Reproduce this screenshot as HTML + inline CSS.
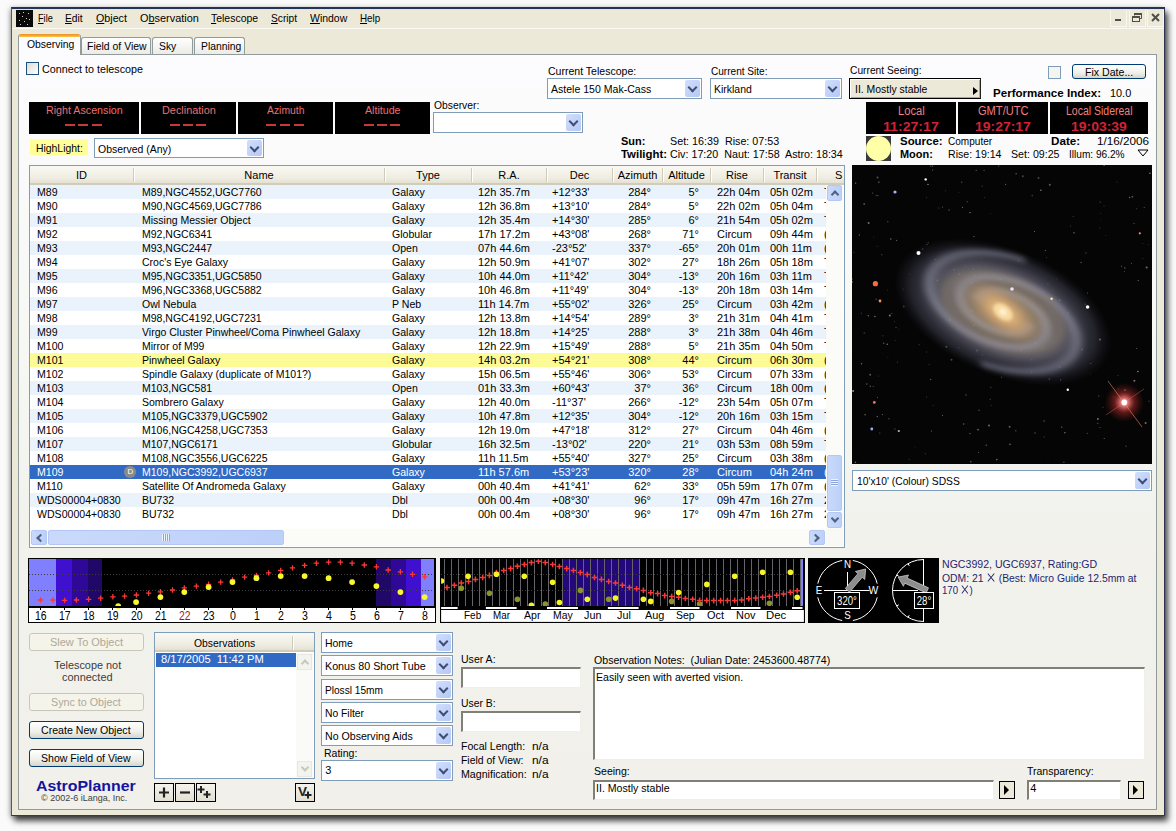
<!DOCTYPE html>
<html><head><meta charset="utf-8">
<style>
*{box-sizing:border-box;margin:0;padding:0}
html,body{width:1176px;height:831px;overflow:hidden;background:#FAFAFA}
body{position:relative;font-family:"Liberation Sans",sans-serif;font-size:11px;color:#000}
.a{position:absolute}
.t{position:absolute;white-space:nowrap;line-height:13px}
.win{position:absolute;left:11px;top:7px;width:1154px;height:809px;background:#ECE9D8;border:1px solid #2c3550;border-top:2px solid #243458;border-left-color:#55585c;border-bottom-color:#3a3a3a;box-shadow:3px 5px 6px rgba(0,0,0,.7),-1px 1px 5px rgba(0,0,0,.3)}
.menu u{text-decoration:underline}
.panel{position:absolute;left:18px;top:54px;width:1139px;height:756px;border:1px solid #919B9C;background:linear-gradient(#FCFCFE 0%,#F7F7F4 38%,#F2F2ED 62%,#F1F0EA 100%)}
.tab{position:absolute;border:1px solid #919B9C;border-bottom:none;border-radius:3px 3px 0 0;background:linear-gradient(#fff,#ECEBE5);text-align:center;line-height:15px}
.dd{position:absolute;background:#fff;border:1px solid #7F9DB9}
.dd .v{position:absolute;right:1px;top:1px;bottom:1px;width:15px;background:linear-gradient(135deg,#D2DEFC,#B4C8F6);border-radius:2px}
.dd .v:after{content:"";position:absolute;left:4px;top:4px;width:5px;height:5px;border-right:2.5px solid #3E4E72;border-bottom:2.5px solid #3E4E72;transform:rotate(45deg)}
.dd .s{position:absolute;left:4px;top:3px;white-space:nowrap;line-height:13px}
.led{position:absolute;background:#000;color:#E8605A;text-align:center}
.btn{position:absolute;border:1px solid #003C74;border-radius:3px;background:linear-gradient(#FFFFFF,#F0F0EA 60%,#D8D4C8);text-align:center;line-height:15px}
.btn.dis{border-color:#C9C7BA;color:#ACA899;background:#F5F4EA}
.chk{position:absolute;width:13px;height:13px;border:1px solid #1C5180;background:linear-gradient(135deg,#DCDCD7,#FFFFFF)}
.b{font-weight:bold}
.sbb{background:linear-gradient(90deg,#CAD9FB,#BCD0F8);border:1px solid #B4C8F6;border-radius:2px}
.chev{position:absolute;left:50%;top:50%;width:6px;height:6px;border-left:2px solid #4D6185;border-top:2px solid #4D6185}
.chev.up{transform:translate(-50%,-25%) rotate(45deg)}
.chev.dn{transform:translate(-50%,-75%) rotate(225deg)}
.chev.lf{transform:translate(-25%,-50%) rotate(-45deg)}
.chev.rt{transform:translate(-75%,-50%) rotate(135deg)}
.grip{position:absolute;left:3px;right:3px;top:50%;height:7px;margin-top:-4px;background:repeating-linear-gradient(#EEF4FE 0 1px,#8CA6D8 1px 2px)}
.grip.h{left:50%;width:8px;right:auto;top:3px;bottom:3px;height:auto;margin:0 0 0 -4px;background:repeating-linear-gradient(90deg,#EEF4FE 0 1px,#8CA6D8 1px 2px)}
</style></head><body>
<div class="win"></div>
<div class="a" style="left:16px;top:10px;width:17px;height:17px;background:#0a0a0a"></div>
<div class="a" style="left:19px;top:13px;width:1px;height:1px;background:#d0d0c0"></div>
<div class="a" style="left:23px;top:12px;width:1px;height:1px;background:#d0d0c0"></div>
<div class="a" style="left:28px;top:13px;width:1px;height:1px;background:#d0d0c0"></div>
<div class="a" style="left:22px;top:16px;width:1px;height:1px;background:#d0d0c0"></div>
<div class="a" style="left:26px;top:18px;width:1px;height:1px;background:#d0d0c0"></div>
<div class="a" style="left:19px;top:20px;width:1px;height:1px;background:#d0d0c0"></div>
<div class="a" style="left:24px;top:21px;width:1px;height:1px;background:#d0d0c0"></div>
<div class="a" style="left:29px;top:19px;width:1px;height:1px;background:#d0d0c0"></div>
<div class="a" style="left:20px;top:24px;width:1px;height:1px;background:#d0d0c0"></div>
<div class="a" style="left:27px;top:24px;width:1px;height:1px;background:#d0d0c0"></div>
<div class="a" style="transform:scaleX(0.8338);transform-origin:0 0;left:38px;top:12.79px;font-size:11px;line-height:11px;white-space:nowrap"><u>F</u>ile</div>
<div class="a" style="transform:scaleX(0.9331);transform-origin:0 0;left:65.2px;top:12.79px;font-size:11px;line-height:11px;white-space:nowrap"><u>E</u>dit</div>
<div class="a" style="transform:scaleX(0.9713);transform-origin:0 0;left:96px;top:12.79px;font-size:11px;line-height:11px;white-space:nowrap"><u>O</u>bject</div>
<div class="a" style="transform:scaleX(0.9911);transform-origin:0 0;left:139.5px;top:12.79px;font-size:11px;line-height:11px;white-space:nowrap">O<u>b</u>servation</div>
<div class="a" style="transform:scaleX(0.9506);transform-origin:0 0;left:211px;top:12.79px;font-size:11px;line-height:11px;white-space:nowrap"><u>T</u>elescope</div>
<div class="a" style="transform:scaleX(0.9280);transform-origin:0 0;left:270.7px;top:12.79px;font-size:11px;line-height:11px;white-space:nowrap"><u>S</u>cript</div>
<div class="a" style="transform:scaleX(0.9504);transform-origin:0 0;left:310px;top:12.79px;font-size:11px;line-height:11px;white-space:nowrap"><u>W</u>indow</div>
<div class="a" style="transform:scaleX(0.8922);transform-origin:0 0;left:359.8px;top:12.79px;font-size:11px;line-height:11px;white-space:nowrap"><u>H</u>elp</div>
<div class="a" style="left:12px;top:28px;width:1152px;height:1px;background:#FAF9F3"></div>
<svg class="a" style="left:1108px;top:9px" width="56" height="19" viewBox="0 0 56 19"><rect x="2.5" y="0.5" width="16" height="17" fill="none" stroke="#F8F7F0" stroke-width="1"/><rect x="21.5" y="0.5" width="16" height="17" fill="none" stroke="#F8F7F0" stroke-width="1"/><rect x="39.5" y="0.5" width="16" height="17" fill="none" stroke="#F8F7F0" stroke-width="1"/><rect x="7" y="10" width="6" height="2" fill="#4E4E48"/><rect x="24.5" y="7.5" width="7" height="5" fill="none" stroke="#4E4E48" stroke-width="1"/><rect x="24" y="7" width="8" height="2" fill="#4E4E48"/><path d="M26.5 6.5V4.5H33.5V9.5H32" fill="none" stroke="#4E4E48" stroke-width="1"/><rect x="26" y="4" width="8" height="2" fill="#4E4E48"/><path d="M44 5L51 12M51 5L44 12" stroke="#4E4E48" stroke-width="2"/></svg>
<div class="a" style="left:12px;top:9px;width:1152px;height:1px;background:#D8E4F8"></div>
<div class="panel"></div>
<div class="tab" style="left:81px;top:37px;width:70px;height:17px"></div>
<div class="tab" style="left:152px;top:37px;width:41px;height:17px"></div>
<div class="tab" style="left:194px;top:37px;width:51px;height:17px"></div>
<div class="a" style="left:18px;top:34px;width:63px;height:21px;background:#FCFCFE;border:1px solid #919B9C;border-top:none;border-bottom:none;border-radius:3px 3px 0 0;overflow:hidden"><div class="a" style="left:-1px;top:0;right:-1px;height:3px;background:linear-gradient(#E68B2C,#FFC73C)"></div></div>
<div class="a" style="transform:scaleX(0.9453);transform-origin:0 0;left:26.8px;top:38.59px;font-size:11px;line-height:11px;white-space:nowrap">Observing</div>
<div class="a" style="transform:scaleX(0.9493);transform-origin:0 0;left:86.7px;top:40.69px;font-size:11px;line-height:11px;white-space:nowrap">Field of View</div>
<div class="a" style="transform:scaleX(0.9431);transform-origin:0 0;left:158.6px;top:40.69px;font-size:11px;line-height:11px;white-space:nowrap">Sky</div>
<div class="a" style="transform:scaleX(0.9410);transform-origin:0 0;left:200.9px;top:40.69px;font-size:11px;line-height:11px;white-space:nowrap">Planning</div>
<div class="chk" style="left:26px;top:62px"></div>
<div class="a" style="transform:scaleX(0.9772);transform-origin:0 0;left:42px;top:64.19px;font-size:11px;line-height:11px;white-space:nowrap">Connect to telescope</div>
<div class="a" style="left:29px;top:102px;width:110px;height:32px;background:#000"></div>
<div class="a" style="transform:scaleX(0.9722);transform-origin:0 0;left:45.65px;top:105.09px;font-size:11px;line-height:11px;color:#E87070;white-space:nowrap">Right Ascension</div>
<div class="a" style="left:65px;top:124px;width:10px;height:2px;background:#C83838"></div>
<div class="a" style="left:78px;top:124px;width:10px;height:2px;background:#C83838"></div>
<div class="a" style="left:92px;top:124px;width:10px;height:2px;background:#C83838"></div>
<div class="a" style="left:141px;top:102px;width:95px;height:32px;background:#000"></div>
<div class="a" style="transform:scaleX(0.9904);transform-origin:0 0;left:161.55px;top:105.09px;font-size:11px;line-height:11px;color:#E87070;white-space:nowrap">Declination</div>
<div class="a" style="left:170px;top:124px;width:10px;height:2px;background:#C83838"></div>
<div class="a" style="left:183px;top:124px;width:10px;height:2px;background:#C83838"></div>
<div class="a" style="left:196px;top:124px;width:10px;height:2px;background:#C83838"></div>
<div class="a" style="left:238px;top:102px;width:95px;height:32px;background:#000"></div>
<div class="a" style="transform:scaleX(0.9434);transform-origin:0 0;left:266.75px;top:105.09px;font-size:11px;line-height:11px;color:#E87070;white-space:nowrap">Azimuth</div>
<div class="a" style="left:266px;top:124px;width:10px;height:2px;background:#C83838"></div>
<div class="a" style="left:280px;top:124px;width:10px;height:2px;background:#C83838"></div>
<div class="a" style="left:294px;top:124px;width:10px;height:2px;background:#C83838"></div>
<div class="a" style="left:335px;top:102px;width:95px;height:32px;background:#000"></div>
<div class="a" style="transform:scaleX(0.9672);transform-origin:0 0;left:364.75px;top:105.09px;font-size:11px;line-height:11px;color:#E87070;white-space:nowrap">Altitude</div>
<div class="a" style="left:364px;top:124px;width:10px;height:2px;background:#C83838"></div>
<div class="a" style="left:377px;top:124px;width:10px;height:2px;background:#C83838"></div>
<div class="a" style="left:390px;top:124px;width:10px;height:2px;background:#C83838"></div>
<div class="a" style="left:30px;top:139px;width:58px;height:16px;background:#FFFF99"></div>
<div class="a" style="transform:scaleX(0.9446);transform-origin:0 0;left:35.5px;top:142.69px;font-size:11px;line-height:11px;white-space:nowrap">HighLight:</div>
<div class="dd" style="left:94px;top:138px;width:170px;height:20px"><div class="v"></div></div>
<div class="a" style="transform:scaleX(0.9516);transform-origin:0 0;left:98px;top:144.19px;font-size:11px;line-height:11px;white-space:nowrap">Observed (Any)</div>
<div class="a" style="transform:scaleX(0.9379);transform-origin:0 0;left:433.8px;top:100.39px;font-size:11px;line-height:11px;white-space:nowrap">Observer:</div>
<div class="dd" style="left:433px;top:112px;width:150px;height:21px"><div class="v"></div></div>
<div class="a" style="transform:scaleX(0.9574);transform-origin:0 0;left:548px;top:65.69px;font-size:11px;line-height:11px;white-space:nowrap">Current Telescope:</div>
<div class="dd" style="left:547px;top:78px;width:155px;height:21px"><div class="v"></div></div>
<div class="a" style="transform:scaleX(0.9584);transform-origin:0 0;left:551px;top:84.39px;font-size:11px;line-height:11px;white-space:nowrap">Astele 150 Mak-Cass</div>
<div class="a" style="transform:scaleX(0.9150);transform-origin:0 0;left:710.7px;top:65.69px;font-size:11px;line-height:11px;white-space:nowrap">Current Site:</div>
<div class="dd" style="left:710px;top:78px;width:132px;height:21px"><div class="v"></div></div>
<div class="a" style="transform:scaleX(0.9509);transform-origin:0 0;left:714.4px;top:84.39px;font-size:11px;line-height:11px;white-space:nowrap">Kirkland</div>
<div class="a" style="transform:scaleX(0.9937);transform-origin:0 0;left:620.9px;top:136.39px;font-size:11px;line-height:11px;font-weight:bold;white-space:nowrap">Sun:</div>
<div class="a" style="transform:scaleX(0.9757);transform-origin:0 0;left:669.9px;top:136.39px;font-size:11px;line-height:11px;white-space:nowrap">Set: 16:39&nbsp; Rise: 07:53</div>
<div class="a" style="transform:scaleX(1.0359);transform-origin:0 0;left:620.9px;top:148.99px;font-size:11px;line-height:11px;font-weight:bold;white-space:nowrap">Twilight:</div>
<div class="a" style="transform:scaleX(0.9744);transform-origin:0 0;left:669.9px;top:148.99px;font-size:11px;line-height:11px;white-space:nowrap">Civ: 17:20&nbsp; Naut: 17:58&nbsp; Astro: 18:34</div>
<div class="a" style="transform:scaleX(0.9293);transform-origin:0 0;left:849.8px;top:65.29px;font-size:11px;line-height:11px;white-space:nowrap">Current Seeing:</div>
<div class="a" style="left:849px;top:78px;width:132px;height:21px;border:1px solid #000;border-right-color:#222;background:#ECE9D8;box-shadow:inset 1px 1px 0 #fff,inset -1px -1px 0 #ACA899"></div>
<div class="a" style="transform:scaleX(0.9474);transform-origin:0 0;left:854.6px;top:84.09px;font-size:11px;line-height:11px;white-space:nowrap">II. Mostly stable</div>
<div class="a" style="left:973px;top:87px;width:0;height:0;border-left:5px solid #000;border-top:4.5px solid transparent;border-bottom:4.5px solid transparent"></div>
<div class="chk" style="left:1048px;top:66px;border-color:#7F9DB9;background:#F4F4F0"></div>
<div class="btn" style="left:1072px;top:64px;width:74px;height:15px"></div>
<div class="a" style="transform:scaleX(0.9616);transform-origin:0 0;left:1085px;top:67.19px;font-size:11px;line-height:11px;white-space:nowrap">Fix Date...</div>
<div class="a" style="transform:scaleX(1.0516);transform-origin:0 0;left:993px;top:87.69px;font-size:11px;line-height:11px;font-weight:bold;white-space:nowrap">Performance Index:</div>
<div class="a" style="transform:scaleX(0.9896);transform-origin:0 0;left:1110px;top:87.69px;font-size:11px;line-height:11px;white-space:nowrap">10.0</div>
<div class="a" style="left:866px;top:102px;width:90px;height:32px;background:#000"></div>
<div class="a" style="transform:scaleX(0.9307);transform-origin:0 0;left:897.65px;top:104.64px;font-size:12px;line-height:12px;color:#EE8080;white-space:nowrap">Local</div>
<div class="a" style="transform:scaleX(1.0871);transform-origin:0 0;left:883.1px;top:119.70px;font-size:13px;line-height:13px;font-weight:bold;color:#D42038;white-space:nowrap">11:27:17</div>
<div class="a" style="left:958px;top:102px;width:90px;height:32px;background:#000"></div>
<div class="a" style="transform:scaleX(0.9240);transform-origin:0 0;left:977.75px;top:104.64px;font-size:12px;line-height:12px;color:#EE8080;white-space:nowrap">GMT/UTC</div>
<div class="a" style="transform:scaleX(1.0721);transform-origin:0 0;left:975.1px;top:119.70px;font-size:13px;line-height:13px;font-weight:bold;color:#D42038;white-space:nowrap">19:27:17</div>
<div class="a" style="left:1050px;top:102px;width:98px;height:32px;background:#000"></div>
<div class="a" style="transform:scaleX(0.8743);transform-origin:0 0;left:1065.75px;top:104.64px;font-size:12px;line-height:12px;color:#EE8080;white-space:nowrap">Local Sidereal</div>
<div class="a" style="transform:scaleX(1.0721);transform-origin:0 0;left:1071.1px;top:119.70px;font-size:13px;line-height:13px;font-weight:bold;color:#D42038;white-space:nowrap">19:03:39</div>
<div class="a" style="left:866px;top:136px;width:25px;height:25px;background:#3a3a3a"></div>
<div class="a" style="left:866px;top:136px;width:25px;height:25px;border-radius:50%;background:#FFFFA8"></div>
<div class="a" style="transform:scaleX(1.0398);transform-origin:0 0;left:899.8px;top:135.69px;font-size:11px;line-height:11px;font-weight:bold;white-space:nowrap">Source:</div>
<div class="a" style="transform:scaleX(0.9131);transform-origin:0 0;left:947.9px;top:135.69px;font-size:11px;line-height:11px;white-space:nowrap">Computer</div>
<div class="a" style="transform:scaleX(1.0612);transform-origin:0 0;left:1050.8px;top:135.69px;font-size:11px;line-height:11px;font-weight:bold;white-space:nowrap">Date:</div>
<div class="a" style="transform:scaleX(1.0626);transform-origin:0 0;left:1097.2px;top:135.69px;font-size:11px;line-height:11px;white-space:nowrap">1/16/2006</div>
<div class="a" style="transform:scaleX(0.9944);transform-origin:0 0;left:899.8px;top:148.59px;font-size:11px;line-height:11px;font-weight:bold;white-space:nowrap">Moon:</div>
<div class="a" style="transform:scaleX(0.9613);transform-origin:0 0;left:947.9px;top:148.59px;font-size:11px;line-height:11px;white-space:nowrap">Rise: 19:14</div>
<div class="a" style="transform:scaleX(0.9670);transform-origin:0 0;left:1010.7px;top:148.59px;font-size:11px;line-height:11px;white-space:nowrap">Set: 09:25</div>
<div class="a" style="transform:scaleX(0.9185);transform-origin:0 0;left:1068.7px;top:148.59px;font-size:11px;line-height:11px;white-space:nowrap">Illum: 96.2%</div>
<svg class="a" style="left:1137px;top:149px" width="12" height="8"><path d="M1 1 H11 L6 7 Z" fill="none" stroke="#000" stroke-width="1"/></svg>
<div class="a" style="left:29px;top:165px;width:816px;height:383px;background:#fff;border:1px solid #7F9DB9"></div>
<div class="a" style="left:30px;top:166px;width:814px;height:19px;background:linear-gradient(#F9F8F3,#EFEDE2 70%,#E4E1D2);border-bottom:2px solid #D0CCBC"></div>
<div class="a" style="left:133px;top:168px;width:2px;height:14px;border-left:1px solid #CFCBBB;border-right:1px solid #fff"></div>
<div class="a" style="left:384px;top:168px;width:2px;height:14px;border-left:1px solid #CFCBBB;border-right:1px solid #fff"></div>
<div class="a" style="left:471px;top:168px;width:2px;height:14px;border-left:1px solid #CFCBBB;border-right:1px solid #fff"></div>
<div class="a" style="left:546px;top:168px;width:2px;height:14px;border-left:1px solid #CFCBBB;border-right:1px solid #fff"></div>
<div class="a" style="left:612px;top:168px;width:2px;height:14px;border-left:1px solid #CFCBBB;border-right:1px solid #fff"></div>
<div class="a" style="left:662px;top:168px;width:2px;height:14px;border-left:1px solid #CFCBBB;border-right:1px solid #fff"></div>
<div class="a" style="left:710px;top:168px;width:2px;height:14px;border-left:1px solid #CFCBBB;border-right:1px solid #fff"></div>
<div class="a" style="left:763px;top:168px;width:2px;height:14px;border-left:1px solid #CFCBBB;border-right:1px solid #fff"></div>
<div class="a" style="left:816px;top:168px;width:2px;height:14px;border-left:1px solid #CFCBBB;border-right:1px solid #fff"></div>
<div class="t" style="left:30px;width:103px;text-align:center;top:169px">ID</div>
<div class="t" style="left:134px;width:250px;text-align:center;top:169px">Name</div>
<div class="t" style="left:385px;width:86px;text-align:center;top:169px">Type</div>
<div class="t" style="left:472px;width:74px;text-align:center;top:169px">R.A.</div>
<div class="t" style="left:547px;width:65px;text-align:center;top:169px">Dec</div>
<div class="t" style="left:613px;width:49px;text-align:center;top:169px">Azimuth</div>
<div class="t" style="left:663px;width:47px;text-align:center;top:169px">Altitude</div>
<div class="t" style="left:711px;width:52px;text-align:center;top:169px">Rise</div>
<div class="t" style="left:764px;width:52px;text-align:center;top:169px">Transit</div>
<div class="t" style="left:835px;top:169px">S</div>
<div class="a" style="left:30px;top:185px;width:796px;height:344px;overflow:hidden">
<div class="a" style="left:0;top:0px;width:800px;height:14px;background:#EAF3FB"></div>
<div class="t" style="left:7px;top:1px;color:#000;transform:scaleX(0.96);transform-origin:0 0;">M89</div>
<div class="t" style="left:112px;top:1px;color:#000;transform:scaleX(0.955);transform-origin:0 0;">M89,NGC4552,UGC7760</div>
<div class="t" style="left:362px;top:1px;color:#000;transform:scaleX(0.96);transform-origin:0 0;">Galaxy</div>
<div class="t" style="left:448px;top:1px;color:#000;">12h 35.7m</div>
<div class="t" style="left:522px;top:1px;color:#000;">+12°33'</div>
<div class="t" style="right:175px;top:1px;color:#000">284°</div>
<div class="t" style="right:127px;top:1px;color:#000">5°</div>
<div class="t" style="left:687px;top:1px;color:#000;">22h 04m</div>
<div class="t" style="left:740px;top:1px;color:#000;">05h 02m</div>
<div class="t" style="left:794px;top:1px;color:#000;">T</div>
<div class="t" style="left:7px;top:15px;color:#000;transform:scaleX(0.96);transform-origin:0 0;">M90</div>
<div class="t" style="left:112px;top:15px;color:#000;transform:scaleX(0.955);transform-origin:0 0;">M90,NGC4569,UGC7786</div>
<div class="t" style="left:362px;top:15px;color:#000;transform:scaleX(0.96);transform-origin:0 0;">Galaxy</div>
<div class="t" style="left:448px;top:15px;color:#000;">12h 36.8m</div>
<div class="t" style="left:522px;top:15px;color:#000;">+13°10'</div>
<div class="t" style="right:175px;top:15px;color:#000">284°</div>
<div class="t" style="right:127px;top:15px;color:#000">5°</div>
<div class="t" style="left:687px;top:15px;color:#000;">22h 02m</div>
<div class="t" style="left:740px;top:15px;color:#000;">05h 04m</div>
<div class="t" style="left:794px;top:15px;color:#000;">T</div>
<div class="a" style="left:0;top:28px;width:800px;height:14px;background:#EAF3FB"></div>
<div class="t" style="left:7px;top:29px;color:#000;transform:scaleX(0.96);transform-origin:0 0;">M91</div>
<div class="t" style="left:112px;top:29px;color:#000;transform:scaleX(0.955);transform-origin:0 0;">Missing Messier Object</div>
<div class="t" style="left:362px;top:29px;color:#000;transform:scaleX(0.96);transform-origin:0 0;">Galaxy</div>
<div class="t" style="left:448px;top:29px;color:#000;">12h 35.4m</div>
<div class="t" style="left:522px;top:29px;color:#000;">+14°30'</div>
<div class="t" style="right:175px;top:29px;color:#000">285°</div>
<div class="t" style="right:127px;top:29px;color:#000">6°</div>
<div class="t" style="left:687px;top:29px;color:#000;">21h 54m</div>
<div class="t" style="left:740px;top:29px;color:#000;">05h 02m</div>
<div class="t" style="left:794px;top:29px;color:#000;">T</div>
<div class="t" style="left:7px;top:43px;color:#000;transform:scaleX(0.96);transform-origin:0 0;">M92</div>
<div class="t" style="left:112px;top:43px;color:#000;transform:scaleX(0.955);transform-origin:0 0;">M92,NGC6341</div>
<div class="t" style="left:362px;top:43px;color:#000;transform:scaleX(0.96);transform-origin:0 0;">Globular</div>
<div class="t" style="left:448px;top:43px;color:#000;">17h 17.2m</div>
<div class="t" style="left:522px;top:43px;color:#000;">+43°08'</div>
<div class="t" style="right:175px;top:43px;color:#000">268°</div>
<div class="t" style="right:127px;top:43px;color:#000">71°</div>
<div class="t" style="left:687px;top:43px;color:#000;">Circum</div>
<div class="t" style="left:740px;top:43px;color:#000;">09h 44m</div>
<div class="t" style="left:794px;top:43px;color:#000;">(</div>
<div class="a" style="left:0;top:56px;width:800px;height:14px;background:#EAF3FB"></div>
<div class="t" style="left:7px;top:57px;color:#000;transform:scaleX(0.96);transform-origin:0 0;">M93</div>
<div class="t" style="left:112px;top:57px;color:#000;transform:scaleX(0.955);transform-origin:0 0;">M93,NGC2447</div>
<div class="t" style="left:362px;top:57px;color:#000;transform:scaleX(0.96);transform-origin:0 0;">Open</div>
<div class="t" style="left:448px;top:57px;color:#000;">07h 44.6m</div>
<div class="t" style="left:522px;top:57px;color:#000;">-23°52'</div>
<div class="t" style="right:175px;top:57px;color:#000">337°</div>
<div class="t" style="right:127px;top:57px;color:#000">-65°</div>
<div class="t" style="left:687px;top:57px;color:#000;">20h 01m</div>
<div class="t" style="left:740px;top:57px;color:#000;">00h 11m</div>
<div class="t" style="left:794px;top:57px;color:#000;">(</div>
<div class="t" style="left:7px;top:71px;color:#000;transform:scaleX(0.96);transform-origin:0 0;">M94</div>
<div class="t" style="left:112px;top:71px;color:#000;transform:scaleX(0.955);transform-origin:0 0;">Croc's Eye Galaxy</div>
<div class="t" style="left:362px;top:71px;color:#000;transform:scaleX(0.96);transform-origin:0 0;">Galaxy</div>
<div class="t" style="left:448px;top:71px;color:#000;">12h 50.9m</div>
<div class="t" style="left:522px;top:71px;color:#000;">+41°07'</div>
<div class="t" style="right:175px;top:71px;color:#000">302°</div>
<div class="t" style="right:127px;top:71px;color:#000">27°</div>
<div class="t" style="left:687px;top:71px;color:#000;">18h 26m</div>
<div class="t" style="left:740px;top:71px;color:#000;">05h 18m</div>
<div class="t" style="left:794px;top:71px;color:#000;">T</div>
<div class="a" style="left:0;top:84px;width:800px;height:14px;background:#EAF3FB"></div>
<div class="t" style="left:7px;top:85px;color:#000;transform:scaleX(0.96);transform-origin:0 0;">M95</div>
<div class="t" style="left:112px;top:85px;color:#000;transform:scaleX(0.955);transform-origin:0 0;">M95,NGC3351,UGC5850</div>
<div class="t" style="left:362px;top:85px;color:#000;transform:scaleX(0.96);transform-origin:0 0;">Galaxy</div>
<div class="t" style="left:448px;top:85px;color:#000;">10h 44.0m</div>
<div class="t" style="left:522px;top:85px;color:#000;">+11°42'</div>
<div class="t" style="right:175px;top:85px;color:#000">304°</div>
<div class="t" style="right:127px;top:85px;color:#000">-13°</div>
<div class="t" style="left:687px;top:85px;color:#000;">20h 16m</div>
<div class="t" style="left:740px;top:85px;color:#000;">03h 11m</div>
<div class="t" style="left:794px;top:85px;color:#000;">T</div>
<div class="t" style="left:7px;top:99px;color:#000;transform:scaleX(0.96);transform-origin:0 0;">M96</div>
<div class="t" style="left:112px;top:99px;color:#000;transform:scaleX(0.955);transform-origin:0 0;">M96,NGC3368,UGC5882</div>
<div class="t" style="left:362px;top:99px;color:#000;transform:scaleX(0.96);transform-origin:0 0;">Galaxy</div>
<div class="t" style="left:448px;top:99px;color:#000;">10h 46.8m</div>
<div class="t" style="left:522px;top:99px;color:#000;">+11°49'</div>
<div class="t" style="right:175px;top:99px;color:#000">304°</div>
<div class="t" style="right:127px;top:99px;color:#000">-13°</div>
<div class="t" style="left:687px;top:99px;color:#000;">20h 18m</div>
<div class="t" style="left:740px;top:99px;color:#000;">03h 14m</div>
<div class="t" style="left:794px;top:99px;color:#000;">T</div>
<div class="a" style="left:0;top:112px;width:800px;height:14px;background:#EAF3FB"></div>
<div class="t" style="left:7px;top:113px;color:#000;transform:scaleX(0.96);transform-origin:0 0;">M97</div>
<div class="t" style="left:112px;top:113px;color:#000;transform:scaleX(0.955);transform-origin:0 0;">Owl Nebula</div>
<div class="t" style="left:362px;top:113px;color:#000;transform:scaleX(0.96);transform-origin:0 0;">P Neb</div>
<div class="t" style="left:448px;top:113px;color:#000;">11h 14.7m</div>
<div class="t" style="left:522px;top:113px;color:#000;">+55°02'</div>
<div class="t" style="right:175px;top:113px;color:#000">326°</div>
<div class="t" style="right:127px;top:113px;color:#000">25°</div>
<div class="t" style="left:687px;top:113px;color:#000;">Circum</div>
<div class="t" style="left:740px;top:113px;color:#000;">03h 42m</div>
<div class="t" style="left:794px;top:113px;color:#000;">(</div>
<div class="t" style="left:7px;top:127px;color:#000;transform:scaleX(0.96);transform-origin:0 0;">M98</div>
<div class="t" style="left:112px;top:127px;color:#000;transform:scaleX(0.955);transform-origin:0 0;">M98,NGC4192,UGC7231</div>
<div class="t" style="left:362px;top:127px;color:#000;transform:scaleX(0.96);transform-origin:0 0;">Galaxy</div>
<div class="t" style="left:448px;top:127px;color:#000;">12h 13.8m</div>
<div class="t" style="left:522px;top:127px;color:#000;">+14°54'</div>
<div class="t" style="right:175px;top:127px;color:#000">289°</div>
<div class="t" style="right:127px;top:127px;color:#000">3°</div>
<div class="t" style="left:687px;top:127px;color:#000;">21h 31m</div>
<div class="t" style="left:740px;top:127px;color:#000;">04h 41m</div>
<div class="t" style="left:794px;top:127px;color:#000;">T</div>
<div class="a" style="left:0;top:140px;width:800px;height:14px;background:#EAF3FB"></div>
<div class="t" style="left:7px;top:141px;color:#000;transform:scaleX(0.96);transform-origin:0 0;">M99</div>
<div class="t" style="left:112px;top:141px;color:#000;transform:scaleX(0.955);transform-origin:0 0;">Virgo Cluster Pinwheel/Coma Pinwheel Galaxy</div>
<div class="t" style="left:362px;top:141px;color:#000;transform:scaleX(0.96);transform-origin:0 0;">Galaxy</div>
<div class="t" style="left:448px;top:141px;color:#000;">12h 18.8m</div>
<div class="t" style="left:522px;top:141px;color:#000;">+14°25'</div>
<div class="t" style="right:175px;top:141px;color:#000">288°</div>
<div class="t" style="right:127px;top:141px;color:#000">3°</div>
<div class="t" style="left:687px;top:141px;color:#000;">21h 38m</div>
<div class="t" style="left:740px;top:141px;color:#000;">04h 46m</div>
<div class="t" style="left:794px;top:141px;color:#000;">T</div>
<div class="t" style="left:7px;top:155px;color:#000;transform:scaleX(0.96);transform-origin:0 0;">M100</div>
<div class="t" style="left:112px;top:155px;color:#000;transform:scaleX(0.955);transform-origin:0 0;">Mirror of M99</div>
<div class="t" style="left:362px;top:155px;color:#000;transform:scaleX(0.96);transform-origin:0 0;">Galaxy</div>
<div class="t" style="left:448px;top:155px;color:#000;">12h 22.9m</div>
<div class="t" style="left:522px;top:155px;color:#000;">+15°49'</div>
<div class="t" style="right:175px;top:155px;color:#000">288°</div>
<div class="t" style="right:127px;top:155px;color:#000">5°</div>
<div class="t" style="left:687px;top:155px;color:#000;">21h 35m</div>
<div class="t" style="left:740px;top:155px;color:#000;">04h 50m</div>
<div class="t" style="left:794px;top:155px;color:#000;">T</div>
<div class="a" style="left:0;top:168px;width:800px;height:14px;background:#FDFB96"></div>
<div class="t" style="left:7px;top:169px;color:#000;transform:scaleX(0.96);transform-origin:0 0;">M101</div>
<div class="t" style="left:112px;top:169px;color:#000;transform:scaleX(0.955);transform-origin:0 0;">Pinwheel Galaxy</div>
<div class="t" style="left:362px;top:169px;color:#000;transform:scaleX(0.96);transform-origin:0 0;">Galaxy</div>
<div class="t" style="left:448px;top:169px;color:#000;">14h 03.2m</div>
<div class="t" style="left:522px;top:169px;color:#000;">+54°21'</div>
<div class="t" style="right:175px;top:169px;color:#000">308°</div>
<div class="t" style="right:127px;top:169px;color:#000">44°</div>
<div class="t" style="left:687px;top:169px;color:#000;">Circum</div>
<div class="t" style="left:740px;top:169px;color:#000;">06h 30m</div>
<div class="t" style="left:794px;top:169px;color:#000;">(</div>
<div class="t" style="left:7px;top:183px;color:#000;transform:scaleX(0.96);transform-origin:0 0;">M102</div>
<div class="t" style="left:112px;top:183px;color:#000;transform:scaleX(0.955);transform-origin:0 0;">Spindle Galaxy (duplicate of M101?)</div>
<div class="t" style="left:362px;top:183px;color:#000;transform:scaleX(0.96);transform-origin:0 0;">Galaxy</div>
<div class="t" style="left:448px;top:183px;color:#000;">15h 06.5m</div>
<div class="t" style="left:522px;top:183px;color:#000;">+55°46'</div>
<div class="t" style="right:175px;top:183px;color:#000">306°</div>
<div class="t" style="right:127px;top:183px;color:#000">53°</div>
<div class="t" style="left:687px;top:183px;color:#000;">Circum</div>
<div class="t" style="left:740px;top:183px;color:#000;">07h 33m</div>
<div class="t" style="left:794px;top:183px;color:#000;">(</div>
<div class="a" style="left:0;top:196px;width:800px;height:14px;background:#EAF3FB"></div>
<div class="t" style="left:7px;top:197px;color:#000;transform:scaleX(0.96);transform-origin:0 0;">M103</div>
<div class="t" style="left:112px;top:197px;color:#000;transform:scaleX(0.955);transform-origin:0 0;">M103,NGC581</div>
<div class="t" style="left:362px;top:197px;color:#000;transform:scaleX(0.96);transform-origin:0 0;">Open</div>
<div class="t" style="left:448px;top:197px;color:#000;">01h 33.3m</div>
<div class="t" style="left:522px;top:197px;color:#000;">+60°43'</div>
<div class="t" style="right:175px;top:197px;color:#000">37°</div>
<div class="t" style="right:127px;top:197px;color:#000">36°</div>
<div class="t" style="left:687px;top:197px;color:#000;">Circum</div>
<div class="t" style="left:740px;top:197px;color:#000;">18h 00m</div>
<div class="t" style="left:794px;top:197px;color:#000;">(</div>
<div class="t" style="left:7px;top:211px;color:#000;transform:scaleX(0.96);transform-origin:0 0;">M104</div>
<div class="t" style="left:112px;top:211px;color:#000;transform:scaleX(0.955);transform-origin:0 0;">Sombrero Galaxy</div>
<div class="t" style="left:362px;top:211px;color:#000;transform:scaleX(0.96);transform-origin:0 0;">Galaxy</div>
<div class="t" style="left:448px;top:211px;color:#000;">12h 40.0m</div>
<div class="t" style="left:522px;top:211px;color:#000;">-11°37'</div>
<div class="t" style="right:175px;top:211px;color:#000">266°</div>
<div class="t" style="right:127px;top:211px;color:#000">-12°</div>
<div class="t" style="left:687px;top:211px;color:#000;">23h 54m</div>
<div class="t" style="left:740px;top:211px;color:#000;">05h 07m</div>
<div class="t" style="left:794px;top:211px;color:#000;">T</div>
<div class="a" style="left:0;top:224px;width:800px;height:14px;background:#EAF3FB"></div>
<div class="t" style="left:7px;top:225px;color:#000;transform:scaleX(0.96);transform-origin:0 0;">M105</div>
<div class="t" style="left:112px;top:225px;color:#000;transform:scaleX(0.955);transform-origin:0 0;">M105,NGC3379,UGC5902</div>
<div class="t" style="left:362px;top:225px;color:#000;transform:scaleX(0.96);transform-origin:0 0;">Galaxy</div>
<div class="t" style="left:448px;top:225px;color:#000;">10h 47.8m</div>
<div class="t" style="left:522px;top:225px;color:#000;">+12°35'</div>
<div class="t" style="right:175px;top:225px;color:#000">304°</div>
<div class="t" style="right:127px;top:225px;color:#000">-12°</div>
<div class="t" style="left:687px;top:225px;color:#000;">20h 16m</div>
<div class="t" style="left:740px;top:225px;color:#000;">03h 15m</div>
<div class="t" style="left:794px;top:225px;color:#000;">T</div>
<div class="t" style="left:7px;top:239px;color:#000;transform:scaleX(0.96);transform-origin:0 0;">M106</div>
<div class="t" style="left:112px;top:239px;color:#000;transform:scaleX(0.955);transform-origin:0 0;">M106,NGC4258,UGC7353</div>
<div class="t" style="left:362px;top:239px;color:#000;transform:scaleX(0.96);transform-origin:0 0;">Galaxy</div>
<div class="t" style="left:448px;top:239px;color:#000;">12h 19.0m</div>
<div class="t" style="left:522px;top:239px;color:#000;">+47°18'</div>
<div class="t" style="right:175px;top:239px;color:#000">312°</div>
<div class="t" style="right:127px;top:239px;color:#000">27°</div>
<div class="t" style="left:687px;top:239px;color:#000;">Circum</div>
<div class="t" style="left:740px;top:239px;color:#000;">04h 46m</div>
<div class="t" style="left:794px;top:239px;color:#000;">(</div>
<div class="a" style="left:0;top:252px;width:800px;height:14px;background:#EAF3FB"></div>
<div class="t" style="left:7px;top:253px;color:#000;transform:scaleX(0.96);transform-origin:0 0;">M107</div>
<div class="t" style="left:112px;top:253px;color:#000;transform:scaleX(0.955);transform-origin:0 0;">M107,NGC6171</div>
<div class="t" style="left:362px;top:253px;color:#000;transform:scaleX(0.96);transform-origin:0 0;">Globular</div>
<div class="t" style="left:448px;top:253px;color:#000;">16h 32.5m</div>
<div class="t" style="left:522px;top:253px;color:#000;">-13°02'</div>
<div class="t" style="right:175px;top:253px;color:#000">220°</div>
<div class="t" style="right:127px;top:253px;color:#000">21°</div>
<div class="t" style="left:687px;top:253px;color:#000;">03h 53m</div>
<div class="t" style="left:740px;top:253px;color:#000;">08h 59m</div>
<div class="t" style="left:794px;top:253px;color:#000;">T</div>
<div class="t" style="left:7px;top:267px;color:#000;transform:scaleX(0.96);transform-origin:0 0;">M108</div>
<div class="t" style="left:112px;top:267px;color:#000;transform:scaleX(0.955);transform-origin:0 0;">M108,NGC3556,UGC6225</div>
<div class="t" style="left:362px;top:267px;color:#000;transform:scaleX(0.96);transform-origin:0 0;">Galaxy</div>
<div class="t" style="left:448px;top:267px;color:#000;">11h 11.5m</div>
<div class="t" style="left:522px;top:267px;color:#000;">+55°40'</div>
<div class="t" style="right:175px;top:267px;color:#000">327°</div>
<div class="t" style="right:127px;top:267px;color:#000">25°</div>
<div class="t" style="left:687px;top:267px;color:#000;">Circum</div>
<div class="t" style="left:740px;top:267px;color:#000;">03h 38m</div>
<div class="t" style="left:794px;top:267px;color:#000;">(</div>
<div class="a" style="left:0;top:280px;width:800px;height:14px;background:#316AC5"></div>
<div class="t" style="left:7px;top:281px;color:#fff;transform:scaleX(0.96);transform-origin:0 0;">M109</div>
<div class="t" style="left:112px;top:281px;color:#fff;transform:scaleX(0.955);transform-origin:0 0;">M109,NGC3992,UGC6937</div>
<div class="t" style="left:362px;top:281px;color:#fff;transform:scaleX(0.96);transform-origin:0 0;">Galaxy</div>
<div class="t" style="left:448px;top:281px;color:#fff;">11h 57.6m</div>
<div class="t" style="left:522px;top:281px;color:#fff;">+53°23'</div>
<div class="t" style="right:175px;top:281px;color:#fff">320°</div>
<div class="t" style="right:127px;top:281px;color:#fff">28°</div>
<div class="t" style="left:687px;top:281px;color:#fff;">Circum</div>
<div class="t" style="left:740px;top:281px;color:#fff;">04h 24m</div>
<div class="t" style="left:794px;top:281px;color:#fff;">(</div>
<div class="a" style="left:94px;top:281px;width:12px;height:12px;border-radius:50%;background:#8A8A8A"></div>
<div class="t" style="left:97.5px;top:281px;color:#fff;font-size:8px;line-height:12px">D</div>
<div class="t" style="left:7px;top:295px;color:#000;transform:scaleX(0.96);transform-origin:0 0;">M110</div>
<div class="t" style="left:112px;top:295px;color:#000;transform:scaleX(0.955);transform-origin:0 0;">Satellite Of Andromeda Galaxy</div>
<div class="t" style="left:362px;top:295px;color:#000;transform:scaleX(0.96);transform-origin:0 0;">Galaxy</div>
<div class="t" style="left:448px;top:295px;color:#000;">00h 40.4m</div>
<div class="t" style="left:522px;top:295px;color:#000;">+41°41'</div>
<div class="t" style="right:175px;top:295px;color:#000">62°</div>
<div class="t" style="right:127px;top:295px;color:#000">33°</div>
<div class="t" style="left:687px;top:295px;color:#000;">05h 59m</div>
<div class="t" style="left:740px;top:295px;color:#000;">17h 07m</div>
<div class="t" style="left:794px;top:295px;color:#000;">(</div>
<div class="a" style="left:0;top:308px;width:800px;height:14px;background:#EAF3FB"></div>
<div class="t" style="left:7px;top:309px;color:#000;transform:scaleX(0.96);transform-origin:0 0;">WDS00004+0830</div>
<div class="t" style="left:112px;top:309px;color:#000;transform:scaleX(0.955);transform-origin:0 0;">BU732</div>
<div class="t" style="left:362px;top:309px;color:#000;transform:scaleX(0.96);transform-origin:0 0;">Dbl</div>
<div class="t" style="left:448px;top:309px;color:#000;">00h 00.4m</div>
<div class="t" style="left:522px;top:309px;color:#000;">+08°30'</div>
<div class="t" style="right:175px;top:309px;color:#000">96°</div>
<div class="t" style="right:127px;top:309px;color:#000">17°</div>
<div class="t" style="left:687px;top:309px;color:#000;">09h 47m</div>
<div class="t" style="left:740px;top:309px;color:#000;">16h 27m</div>
<div class="t" style="left:794px;top:309px;color:#000;">2</div>
<div class="t" style="left:7px;top:323px;color:#000;transform:scaleX(0.96);transform-origin:0 0;">WDS00004+0830</div>
<div class="t" style="left:112px;top:323px;color:#000;transform:scaleX(0.955);transform-origin:0 0;">BU732</div>
<div class="t" style="left:362px;top:323px;color:#000;transform:scaleX(0.96);transform-origin:0 0;">Dbl</div>
<div class="t" style="left:448px;top:323px;color:#000;">00h 00.4m</div>
<div class="t" style="left:522px;top:323px;color:#000;">+08°30'</div>
<div class="t" style="right:175px;top:323px;color:#000">96°</div>
<div class="t" style="right:127px;top:323px;color:#000">17°</div>
<div class="t" style="left:687px;top:323px;color:#000;">09h 47m</div>
<div class="t" style="left:740px;top:323px;color:#000;">16h 27m</div>
<div class="t" style="left:794px;top:323px;color:#000;">2</div>
</div>
<div class="a" style="left:826px;top:185px;width:17px;height:345px;background:#FBFBF8"></div>
<div class="a sbb" style="left:827px;top:185px;width:15px;height:16px"><div class="chev up"></div></div>
<div class="a sbb" style="left:827px;top:455px;width:15px;height:56px"><div class="grip"></div></div>
<div class="a sbb" style="left:827px;top:512px;width:15px;height:16px"><div class="chev dn"></div></div>
<div class="a" style="left:30px;top:529px;width:796px;height:17px;background:#FBFBF8"></div>
<div class="a sbb" style="left:31px;top:530px;width:16px;height:15px"><div class="chev lf"></div></div>
<div class="a sbb" style="left:48px;top:530px;width:236px;height:15px"><div class="grip h"></div></div>
<div class="a sbb" style="left:809px;top:530px;width:16px;height:15px"><div class="chev rt"></div></div>
<div class="a" style="left:826px;top:529px;width:17px;height:17px;background:#F8F8F4"></div>
<svg class="a" style="left:852px;top:165px" width="300" height="299" viewBox="0 0 300 299">
<defs>
<radialGradient id="halo" cx="50%" cy="50%" r="50%">
<stop offset="0" stop-color="#b09878" stop-opacity="1"/>
<stop offset="0.35" stop-color="#948470" stop-opacity="0.88"/>
<stop offset="0.62" stop-color="#7a7888" stop-opacity="0.66"/>
<stop offset="0.84" stop-color="#585870" stop-opacity="0.36"/>
<stop offset="1" stop-color="#303040" stop-opacity="0"/>
</radialGradient>
<radialGradient id="core" cx="50%" cy="50%" r="50%">
<stop offset="0" stop-color="#f8d090" stop-opacity="1"/>
<stop offset="0.45" stop-color="#d8a870" stop-opacity="0.7"/>
<stop offset="1" stop-color="#a88060" stop-opacity="0"/>
</radialGradient>
<filter id="bl" x="-50%" y="-50%" width="200%" height="200%"><feGaussianBlur stdDeviation="3.5"/></filter>
<filter id="bl2" x="-50%" y="-50%" width="200%" height="200%"><feGaussianBlur stdDeviation="1.5"/></filter>
<filter id="bls" x="-100%" y="-100%" width="300%" height="300%"><feGaussianBlur stdDeviation="0.6"/></filter>
<radialGradient id="rs" cx="50%" cy="50%" r="50%"><stop offset="0" stop-color="#ffffff"/><stop offset="0.15" stop-color="#ff9090" stop-opacity="0.95"/><stop offset="0.5" stop-color="#c03030" stop-opacity="0.5"/><stop offset="1" stop-color="#802020" stop-opacity="0"/></radialGradient>
</defs>
<rect width="300" height="299" fill="#050505"/>
<g filter="url(#bls)"><circle cx="97.1" cy="45.1" r="1.0" fill="#ffffff" opacity="0.17"/><circle cx="109.7" cy="17.3" r="0.8" fill="#ffffff" opacity="0.25"/><circle cx="130.1" cy="20.9" r="0.5" fill="#ffffff" opacity="0.40"/><circle cx="248.1" cy="37.0" r="0.5" fill="#ffffff" opacity="0.43"/><circle cx="173.1" cy="118.6" r="0.5" fill="#ffe0c0" opacity="0.17"/><circle cx="86.9" cy="43.1" r="0.5" fill="#ffe0c0" opacity="0.41"/><circle cx="30.9" cy="170.8" r="0.5" fill="#ffffff" opacity="0.32"/><circle cx="169.3" cy="185.1" r="0.7" fill="#ffc0a0" opacity="0.46"/><circle cx="233.2" cy="139.2" r="0.7" fill="#ffe0c0" opacity="0.31"/><circle cx="238.3" cy="209.0" r="0.5" fill="#c0d0ff" opacity="0.19"/><circle cx="157.6" cy="261.7" r="1.0" fill="#ffffff" opacity="0.35"/><circle cx="35.4" cy="125.0" r="0.6" fill="#ffc0a0" opacity="0.22"/><circle cx="126.5" cy="287.6" r="0.5" fill="#c0d0ff" opacity="0.49"/><circle cx="102.0" cy="104.7" r="0.7" fill="#ffc0a0" opacity="0.41"/><circle cx="20.6" cy="28.0" r="0.6" fill="#ffffff" opacity="0.36"/><circle cx="18.2" cy="209.7" r="1.0" fill="#ffc0a0" opacity="0.41"/><circle cx="85.4" cy="115.4" r="1.0" fill="#ffc0a0" opacity="0.31"/><circle cx="106.6" cy="182.7" r="0.7" fill="#c0d0ff" opacity="0.18"/><circle cx="38.8" cy="74.0" r="0.7" fill="#ffc0a0" opacity="0.56"/><circle cx="24.2" cy="134.3" r="0.8" fill="#ffe0c0" opacity="0.28"/><circle cx="245.8" cy="258.3" r="0.6" fill="#c0d0ff" opacity="0.47"/><circle cx="204.8" cy="113.8" r="0.5" fill="#ffe0c0" opacity="0.22"/><circle cx="45.4" cy="196.9" r="0.5" fill="#ffe0c0" opacity="0.37"/><circle cx="78.8" cy="1.2" r="0.7" fill="#c0d0ff" opacity="0.39"/><circle cx="285.9" cy="206.5" r="0.8" fill="#ffffff" opacity="0.58"/><circle cx="137.0" cy="260.4" r="1.0" fill="#ffc0a0" opacity="0.51"/><circle cx="119.4" cy="117.8" r="0.7" fill="#ffffff" opacity="0.44"/><circle cx="57.2" cy="294.4" r="0.7" fill="#c0d0ff" opacity="0.22"/><circle cx="180.2" cy="30.6" r="0.8" fill="#ffffff" opacity="0.22"/><circle cx="284.7" cy="183.5" r="0.5" fill="#ffc0a0" opacity="0.54"/><circle cx="44.6" cy="75.4" r="0.6" fill="#ffc0a0" opacity="0.42"/><circle cx="36.9" cy="253.8" r="0.7" fill="#c0d0ff" opacity="0.37"/><circle cx="25.8" cy="30.6" r="0.6" fill="#ffc0a0" opacity="0.48"/><circle cx="248.7" cy="48.3" r="0.5" fill="#c0d0ff" opacity="0.24"/><circle cx="44.0" cy="162.4" r="0.5" fill="#c0d0ff" opacity="0.49"/><circle cx="293.6" cy="258.1" r="1.0" fill="#c0d0ff" opacity="0.53"/><circle cx="272.5" cy="106.4" r="0.5" fill="#c0d0ff" opacity="0.39"/><circle cx="190.9" cy="183.4" r="0.5" fill="#ffc0a0" opacity="0.51"/><circle cx="222.0" cy="67.8" r="0.8" fill="#ffffff" opacity="0.37"/><circle cx="296.9" cy="236.2" r="0.7" fill="#c0d0ff" opacity="0.27"/><circle cx="134.2" cy="280.2" r="0.6" fill="#c0d0ff" opacity="0.58"/><circle cx="24.2" cy="30.5" r="0.7" fill="#ffe0c0" opacity="0.24"/><circle cx="144.8" cy="294.6" r="0.8" fill="#ffc0a0" opacity="0.53"/><circle cx="272.8" cy="102.9" r="1.0" fill="#ffffff" opacity="0.19"/><circle cx="272.9" cy="233.9" r="0.5" fill="#ffe0c0" opacity="0.37"/><circle cx="130.2" cy="190.1" r="0.5" fill="#ffc0a0" opacity="0.51"/><circle cx="138.9" cy="222.3" r="0.5" fill="#ffe0c0" opacity="0.48"/><circle cx="297.9" cy="8.2" r="0.8" fill="#ffe0c0" opacity="0.56"/><circle cx="183.5" cy="178.2" r="0.7" fill="#c0d0ff" opacity="0.45"/><circle cx="46.8" cy="163.9" r="0.5" fill="#ffffff" opacity="0.16"/><circle cx="158.0" cy="279.2" r="0.7" fill="#ffe0c0" opacity="0.59"/><circle cx="247.8" cy="63.1" r="0.6" fill="#ffe0c0" opacity="0.25"/><circle cx="229.1" cy="97.5" r="0.8" fill="#ffe0c0" opacity="0.34"/><circle cx="18.3" cy="221.2" r="0.7" fill="#ffc0a0" opacity="0.45"/><circle cx="248.1" cy="262.6" r="0.5" fill="#ffffff" opacity="0.39"/><circle cx="261.8" cy="232.2" r="0.8" fill="#ffe0c0" opacity="0.15"/><circle cx="51.7" cy="141.6" r="1.0" fill="#ffffff" opacity="0.20"/><circle cx="97.8" cy="155.0" r="0.8" fill="#ffffff" opacity="0.37"/><circle cx="265.0" cy="17.0" r="0.5" fill="#ffffff" opacity="0.27"/><circle cx="152.3" cy="168.0" r="0.5" fill="#ffe0c0" opacity="0.35"/><circle cx="207.8" cy="135.3" r="0.8" fill="#ffe0c0" opacity="0.51"/><circle cx="209.8" cy="262.1" r="0.6" fill="#ffe0c0" opacity="0.57"/><circle cx="252.0" cy="41.0" r="0.5" fill="#c0d0ff" opacity="0.33"/><circle cx="21.8" cy="72.0" r="0.5" fill="#c0d0ff" opacity="0.25"/><circle cx="235.2" cy="268.2" r="0.5" fill="#c0d0ff" opacity="0.57"/><circle cx="42.9" cy="264.0" r="0.7" fill="#ffffff" opacity="0.25"/><circle cx="119.5" cy="145.7" r="1.0" fill="#ffe0c0" opacity="0.52"/><circle cx="211.9" cy="297.2" r="0.7" fill="#ffe0c0" opacity="0.30"/><circle cx="107.0" cy="27.6" r="0.6" fill="#ffc0a0" opacity="0.16"/><circle cx="132.1" cy="5.4" r="0.6" fill="#c0d0ff" opacity="0.38"/><circle cx="153.7" cy="19.2" r="0.5" fill="#ffffff" opacity="0.59"/><circle cx="25.2" cy="81.3" r="0.5" fill="#ffe0c0" opacity="0.27"/><circle cx="245.9" cy="254.0" r="1.0" fill="#c0d0ff" opacity="0.52"/><circle cx="121.8" cy="160.4" r="0.8" fill="#c0d0ff" opacity="0.41"/><circle cx="26.8" cy="17.2" r="1.0" fill="#ffffff" opacity="0.23"/><circle cx="80.7" cy="5.0" r="0.5" fill="#ffffff" opacity="0.51"/><circle cx="182.5" cy="66.5" r="0.6" fill="#ffc0a0" opacity="0.54"/><circle cx="3.5" cy="297.3" r="0.7" fill="#c0d0ff" opacity="0.57"/><circle cx="186.5" cy="12.9" r="1.0" fill="#ffffff" opacity="0.26"/><circle cx="290.8" cy="78.3" r="0.5" fill="#c0d0ff" opacity="0.24"/><circle cx="188.6" cy="158.8" r="0.5" fill="#ffe0c0" opacity="0.28"/><circle cx="81.2" cy="240.3" r="0.6" fill="#ffffff" opacity="0.17"/><circle cx="219.9" cy="164.8" r="0.5" fill="#ffe0c0" opacity="0.38"/><circle cx="280.4" cy="31.8" r="1.0" fill="#ffc0a0" opacity="0.34"/><circle cx="163.8" cy="265.7" r="0.8" fill="#ffe0c0" opacity="0.29"/><circle cx="294.7" cy="102.5" r="1.0" fill="#ffe0c0" opacity="0.48"/><circle cx="121.4" cy="103.9" r="0.5" fill="#ffffff" opacity="0.53"/><circle cx="21.2" cy="221.5" r="0.6" fill="#ffffff" opacity="0.34"/><circle cx="25.3" cy="251.5" r="0.8" fill="#c0d0ff" opacity="0.45"/><circle cx="179.6" cy="207.1" r="0.5" fill="#ffe0c0" opacity="0.36"/><circle cx="80.7" cy="1.1" r="0.6" fill="#c0d0ff" opacity="0.58"/><circle cx="73.3" cy="288.7" r="0.6" fill="#ffe0c0" opacity="0.25"/><circle cx="0.3" cy="114.1" r="0.7" fill="#ffe0c0" opacity="0.28"/><circle cx="74.5" cy="232.1" r="0.5" fill="#ffffff" opacity="0.27"/><circle cx="43.2" cy="175.5" r="0.7" fill="#c0d0ff" opacity="0.16"/><circle cx="188.9" cy="25.3" r="0.8" fill="#ffe0c0" opacity="0.53"/><circle cx="197.3" cy="214.1" r="0.8" fill="#c0d0ff" opacity="0.33"/><circle cx="216.2" cy="147.8" r="0.6" fill="#ffe0c0" opacity="0.48"/><circle cx="13.1" cy="249.8" r="0.8" fill="#ffe0c0" opacity="0.43"/><circle cx="273.0" cy="225.1" r="0.8" fill="#ffffff" opacity="0.53"/><circle cx="247.9" cy="174.6" r="1.0" fill="#ffe0c0" opacity="0.46"/><circle cx="25.5" cy="12.5" r="1.0" fill="#ffffff" opacity="0.31"/><circle cx="113.0" cy="135.0" r="0.5" fill="#ffe0c0" opacity="0.43"/><circle cx="146.8" cy="1.0" r="0.5" fill="#ffffff" opacity="0.49"/><circle cx="197.8" cy="19.7" r="1.0" fill="#ffffff" opacity="0.36"/><circle cx="253.8" cy="70.2" r="0.5" fill="#ffc0a0" opacity="0.25"/><circle cx="148.2" cy="114.4" r="0.7" fill="#c0d0ff" opacity="0.56"/><circle cx="230.1" cy="184.5" r="1.0" fill="#ffe0c0" opacity="0.24"/><circle cx="99.5" cy="194.8" r="1.0" fill="#ffe0c0" opacity="0.29"/><circle cx="3.7" cy="18.1" r="0.6" fill="#ffffff" opacity="0.59"/><circle cx="207.7" cy="202.0" r="0.6" fill="#c0d0ff" opacity="0.47"/><circle cx="139.4" cy="139.4" r="0.5" fill="#ffe0c0" opacity="0.60"/><circle cx="93.5" cy="25.7" r="0.7" fill="#ffc0a0" opacity="0.16"/><circle cx="22.9" cy="151.5" r="0.7" fill="#ffc0a0" opacity="0.60"/><circle cx="63.0" cy="282.7" r="0.5" fill="#ffffff" opacity="0.18"/><circle cx="42.5" cy="156.7" r="0.6" fill="#c0d0ff" opacity="0.21"/><circle cx="266.1" cy="210.3" r="0.5" fill="#ffc0a0" opacity="0.37"/><circle cx="118.2" cy="47.6" r="0.7" fill="#ffc0a0" opacity="0.46"/><circle cx="90.6" cy="42.1" r="0.6" fill="#ffffff" opacity="0.32"/><circle cx="252.1" cy="0.5" r="0.6" fill="#ffffff" opacity="0.53"/><circle cx="282.0" cy="58.5" r="0.5" fill="#c0d0ff" opacity="0.56"/><circle cx="76.0" cy="19.4" r="0.7" fill="#ffffff" opacity="0.60"/><circle cx="108.2" cy="128.0" r="0.6" fill="#c0d0ff" opacity="0.53"/><circle cx="30.5" cy="249.6" r="0.6" fill="#ffe0c0" opacity="0.44"/><circle cx="74.8" cy="79.5" r="0.8" fill="#c0d0ff" opacity="0.29"/><circle cx="235.5" cy="127.9" r="0.5" fill="#ffc0a0" opacity="0.52"/><circle cx="274.0" cy="281.3" r="0.8" fill="#ffffff" opacity="0.24"/><circle cx="14.8" cy="219.0" r="0.7" fill="#ffe0c0" opacity="0.43"/><circle cx="193.3" cy="85.6" r="0.5" fill="#ffe0c0" opacity="0.56"/><circle cx="51.2" cy="124.0" r="0.6" fill="#c0d0ff" opacity="0.28"/><circle cx="121.9" cy="71.4" r="0.7" fill="#ffc0a0" opacity="0.40"/><circle cx="35.9" cy="192.3" r="0.5" fill="#ffc0a0" opacity="0.24"/><circle cx="165.1" cy="135.4" r="0.6" fill="#ffc0a0" opacity="0.60"/><circle cx="128.2" cy="163.8" r="0.5" fill="#c0d0ff" opacity="0.19"/><circle cx="166.8" cy="95.5" r="0.6" fill="#ffe0c0" opacity="0.27"/><circle cx="266.2" cy="224.1" r="0.7" fill="#ffe0c0" opacity="0.32"/><circle cx="113.1" cy="101.1" r="0.5" fill="#c0d0ff" opacity="0.37"/><circle cx="37.8" cy="150.5" r="1.0" fill="#ffe0c0" opacity="0.51"/><circle cx="27.8" cy="268.1" r="0.7" fill="#ffc0a0" opacity="0.33"/><circle cx="129.6" cy="93.3" r="0.5" fill="#ffc0a0" opacity="0.21"/><circle cx="212.9" cy="267.8" r="0.7" fill="#ffc0a0" opacity="0.59"/><circle cx="0.1" cy="117.1" r="0.8" fill="#ffc0a0" opacity="0.53"/><circle cx="74.5" cy="32.6" r="0.5" fill="#ffffff" opacity="0.22"/><circle cx="282.4" cy="215.8" r="1.0" fill="#ffc0a0" opacity="0.53"/><circle cx="25.5" cy="232.3" r="0.5" fill="#ffe0c0" opacity="0.50"/><circle cx="170.8" cy="11.2" r="1.0" fill="#ffe0c0" opacity="0.29"/><circle cx="187.9" cy="157.9" r="0.7" fill="#ffffff" opacity="0.46"/><circle cx="29.8" cy="89.8" r="0.8" fill="#c0d0ff" opacity="0.24"/><circle cx="67.1" cy="179.7" r="0.5" fill="#ffc0a0" opacity="0.39"/><circle cx="83.6" cy="94.6" r="0.5" fill="#ffe0c0" opacity="0.36"/><circle cx="164.1" cy="8.8" r="0.7" fill="#c0d0ff" opacity="0.47"/><circle cx="16.6" cy="58.0" r="1.0" fill="#ffffff" opacity="0.44"/><circle cx="77.2" cy="199.5" r="0.6" fill="#ffffff" opacity="0.25"/><circle cx="208.7" cy="214.8" r="0.6" fill="#ffe0c0" opacity="0.46"/><circle cx="2.0" cy="87.3" r="0.8" fill="#ffc0a0" opacity="0.18"/><circle cx="291.0" cy="93.2" r="0.5" fill="#ffe0c0" opacity="0.25"/><circle cx="79.5" cy="265.9" r="0.5" fill="#ffc0a0" opacity="0.58"/><circle cx="183.0" cy="268.0" r="0.7" fill="#ffffff" opacity="0.34"/><circle cx="284.6" cy="43.8" r="0.7" fill="#ffffff" opacity="0.17"/><circle cx="292.2" cy="42.4" r="0.5" fill="#ffe0c0" opacity="0.47"/><circle cx="118.0" cy="268.6" r="0.6" fill="#ffffff" opacity="0.48"/><circle cx="279.5" cy="98.4" r="0.5" fill="#ffc0a0" opacity="0.44"/><circle cx="9.6" cy="198.7" r="0.7" fill="#c0d0ff" opacity="0.53"/><circle cx="132.7" cy="32.6" r="0.5" fill="#c0d0ff" opacity="0.28"/><circle cx="126.1" cy="264.7" r="0.8" fill="#ffe0c0" opacity="0.58"/><circle cx="114.0" cy="229.9" r="0.6" fill="#ffc0a0" opacity="0.52"/><circle cx="26.3" cy="210.9" r="0.5" fill="#ffc0a0" opacity="0.32"/><circle cx="57.9" cy="108.9" r="0.7" fill="#ffc0a0" opacity="0.16"/><circle cx="74.4" cy="187.0" r="0.7" fill="#ffffff" opacity="0.17"/><circle cx="139.2" cy="240.2" r="0.5" fill="#ffffff" opacity="0.27"/><circle cx="269.6" cy="101.4" r="0.6" fill="#ffffff" opacity="0.30"/><circle cx="78.7" cy="214.3" r="0.6" fill="#c0d0ff" opacity="0.57"/><circle cx="1.1" cy="225.9" r="1.0" fill="#ffffff" opacity="0.58"/><circle cx="7.3" cy="69.9" r="0.7" fill="#ffc0a0" opacity="0.47"/><circle cx="286.2" cy="115.6" r="0.6" fill="#ffc0a0" opacity="0.56"/><circle cx="39.8" cy="148.5" r="0.5" fill="#c0d0ff" opacity="0.51"/><circle cx="246.8" cy="231.1" r="0.8" fill="#c0d0ff" opacity="0.26"/><circle cx="138.2" cy="234.4" r="0.8" fill="#ffe0c0" opacity="0.19"/><circle cx="117.5" cy="47.8" r="0.7" fill="#ffffff" opacity="0.18"/><circle cx="144.5" cy="162.8" r="0.5" fill="#ffffff" opacity="0.59"/><circle cx="296.3" cy="79.2" r="0.5" fill="#ffc0a0" opacity="0.24"/><circle cx="149.5" cy="212.2" r="0.7" fill="#ffe0c0" opacity="0.23"/><circle cx="125.1" cy="185.5" r="1.0" fill="#ffffff" opacity="0.26"/><circle cx="233.9" cy="87.9" r="0.6" fill="#c0d0ff" opacity="0.41"/><circle cx="76.2" cy="77.8" r="0.7" fill="#ffe0c0" opacity="0.26"/><circle cx="70.7" cy="84.1" r="0.8" fill="#ffffff" opacity="0.23"/><circle cx="118.8" cy="296.7" r="0.8" fill="#ffffff" opacity="0.39"/><circle cx="196.0" cy="296.3" r="0.5" fill="#ffe0c0" opacity="0.15"/><circle cx="252.2" cy="273.4" r="0.5" fill="#ffe0c0" opacity="0.54"/><circle cx="35.8" cy="56.7" r="0.8" fill="#ffffff" opacity="0.24"/><circle cx="111.7" cy="259.0" r="0.7" fill="#ffffff" opacity="0.42"/><circle cx="31.7" cy="178.2" r="0.8" fill="#ffffff" opacity="0.31"/><circle cx="110.6" cy="42.3" r="0.5" fill="#ffffff" opacity="0.60"/><circle cx="179.8" cy="194.8" r="0.5" fill="#c0d0ff" opacity="0.52"/><circle cx="122.7" cy="111.2" r="0.8" fill="#ffe0c0" opacity="0.29"/><circle cx="9.4" cy="148.2" r="0.7" fill="#ffffff" opacity="0.18"/><circle cx="238.8" cy="198.5" r="0.5" fill="#ffffff" opacity="0.44"/><circle cx="195.9" cy="118.9" r="0.6" fill="#c0d0ff" opacity="0.33"/><circle cx="200.3" cy="124.9" r="0.5" fill="#c0d0ff" opacity="0.29"/><circle cx="124.2" cy="5.4" r="0.6" fill="#ffc0a0" opacity="0.44"/><circle cx="218.4" cy="60.9" r="0.5" fill="#ffe0c0" opacity="0.35"/><circle cx="127.1" cy="245.3" r="0.7" fill="#c0d0ff" opacity="0.41"/><circle cx="138.3" cy="48.6" r="0.5" fill="#ffe0c0" opacity="0.17"/><circle cx="192.2" cy="272.0" r="0.5" fill="#c0d0ff" opacity="0.41"/><circle cx="221.2" cy="51.3" r="0.6" fill="#ffe0c0" opacity="0.28"/><circle cx="277.6" cy="32.5" r="0.7" fill="#ffe0c0" opacity="0.49"/><circle cx="90.5" cy="250.4" r="0.5" fill="#ffc0a0" opacity="0.59"/><circle cx="94.4" cy="181.7" r="1.0" fill="#ffe0c0" opacity="0.32"/><circle cx="192.1" cy="256.1" r="0.8" fill="#ffe0c0" opacity="0.33"/><circle cx="248.8" cy="54.7" r="0.5" fill="#ffe0c0" opacity="0.17"/><circle cx="115.1" cy="36.8" r="0.5" fill="#ffe0c0" opacity="0.59"/><circle cx="12.3" cy="168.1" r="1.0" fill="#c0d0ff" opacity="0.17"/><circle cx="35.3" cy="179.3" r="0.8" fill="#c0d0ff" opacity="0.53"/><circle cx="194.7" cy="92.2" r="0.5" fill="#c0d0ff" opacity="0.34"/><circle cx="134.0" cy="131.1" r="0.5" fill="#ffc0a0" opacity="0.15"/><circle cx="139.6" cy="133.6" r="0.8" fill="#ffc0a0" opacity="0.50"/><circle cx="251.0" cy="242.3" r="0.7" fill="#ffe0c0" opacity="0.20"/><circle cx="107.6" cy="109.2" r="0.7" fill="#ffffff" opacity="0.38"/><circle cx="12.2" cy="39.0" r="1.0" fill="#ffffff" opacity="0.29"/><circle cx="16.3" cy="150.7" r="0.7" fill="#ffe0c0" opacity="0.44"/></g>
<g transform="translate(151,147) rotate(23)">
<ellipse rx="116" ry="64" fill="url(#halo)"/>
<g transform="scale(1,0.54)"><path d="M28.0 0.0 L28.4 3.7 L28.3 7.6 L27.6 11.4 L26.5 15.3 L24.8 19.0 L22.6 22.6 L19.9 25.9 L16.7 28.9 L13.0 31.5 L9.0 33.7 L4.6 35.3 L0.0 36.4 L-4.9 36.9 L-9.8 36.7 L-14.9 35.9 L-19.9 34.4 L-24.7 32.2 L-29.3 29.3 L-33.7 25.8 L-37.6 21.7 L-40.9 17.0 L-43.8 11.7 L-45.9 6.0 L-47.3 0.0 L-48.0 -6.3 L-47.8 -12.8 L-46.7 -19.3 L-44.7 -25.8 L-41.9 -32.1 L-38.2 -38.2 L-33.6 -43.8 L-28.2 -48.8 L-22.1 -53.2 L-15.2 -56.9 L-7.9 -59.7 L-0.0 -61.5 L8.2 -62.4 L16.6 -62.1 L25.1 -60.7 L33.6 -58.2 L41.8 -54.5 L49.6 -49.6 L56.9 -43.7 L63.5 -36.6 L69.2 -28.7 L74.0 -19.8 L77.6 -10.2 L80.0 -0.0 L81.1 10.7 L80.7 21.6 L78.9 32.7 L75.6 43.7 L70.8 54.3 L64.5 64.5 L56.8 74.0 L47.6 82.5 L37.3 90.0 L25.8 96.2 L13.3 100.9 L0.0 104.0 M-28.0 0.0 L-28.4 -3.7 L-28.3 -7.6 L-27.6 -11.4 L-26.5 -15.3 L-24.8 -19.0 L-22.6 -22.6 L-19.9 -25.9 L-16.7 -28.9 L-13.0 -31.5 L-9.0 -33.7 L-4.6 -35.3 L-0.0 -36.4 L4.9 -36.9 L9.8 -36.7 L14.9 -35.9 L19.9 -34.4 L24.7 -32.2 L29.3 -29.3 L33.7 -25.8 L37.6 -21.7 L40.9 -17.0 L43.8 -11.7 L45.9 -6.0 L47.3 -0.0 L48.0 6.3 L47.8 12.8 L46.7 19.3 L44.7 25.8 L41.9 32.1 L38.2 38.2 L33.6 43.8 L28.2 48.8 L22.1 53.2 L15.2 56.9 L7.9 59.7 L0.0 61.5 L-8.2 62.4 L-16.6 62.1 L-25.1 60.7 L-33.6 58.2 L-41.8 54.5 L-49.6 49.6 L-56.9 43.7 L-63.5 36.6 L-69.2 28.7 L-74.0 19.8 L-77.6 10.2 L-80.0 0.0 L-81.1 -10.7 L-80.7 -21.6 L-78.9 -32.7 L-75.6 -43.7 L-70.8 -54.3 L-64.5 -64.5 L-56.8 -74.0 L-47.6 -82.5 L-37.3 -90.0 L-25.8 -96.2 L-13.3 -100.9 L-0.0 -104.0" fill="none" stroke="#b8b8d4" stroke-opacity="0.34" stroke-width="11" filter="url(#bl)"/></g>
<ellipse rx="62" ry="33" fill="none" stroke="#c8b090" stroke-opacity="0.18" stroke-width="8" filter="url(#bl)"/>
</g>
<g transform="translate(151,147) rotate(38)">
<ellipse rx="44" ry="22" fill="url(#core)"/>
<ellipse rx="11" ry="7" fill="#fbe0a8" opacity="0.85" filter="url(#bl2)"/>
<ellipse rx="4" ry="3" fill="#fff2d0" filter="url(#bl2)"/>
</g>
<circle cx="272.3" cy="237.4" r="20" fill="url(#rs)"/>
<line x1="256" y1="216" x2="290" y2="262" stroke="#ff9060" stroke-opacity="0.55" stroke-width="1"/>
<line x1="254" y1="250" x2="292" y2="224" stroke="#ff8060" stroke-opacity="0.35" stroke-width="1"/>
<circle cx="272.3" cy="237.4" r="2.8" fill="#fff"/>
<g filter="url(#bls)">
<circle cx="23.4" cy="118.7" r="2.6" fill="#ff6a40"/>
<circle cx="28" cy="136" r="1.4" fill="#ff9050"/>
<circle cx="66.5" cy="88" r="2" fill="#fff"/>
<circle cx="43" cy="27" r="1.6" fill="#a0b0ff"/>
<circle cx="73.7" cy="14.4" r="1.2" fill="#fff"/>
<circle cx="160" cy="124" r="1.8" fill="#f0e0ff"/>
<circle cx="235.6" cy="142" r="1.8" fill="#fff"/>
<circle cx="22.3" cy="237.4" r="1.4" fill="#ff7060"/>
<circle cx="19.8" cy="264" r="1.4" fill="#a0b0ff"/>
<circle cx="46.8" cy="266" r="1.1" fill="#c0c0c0"/>
<circle cx="215.8" cy="224.8" r="1.2" fill="#fff"/>
<circle cx="199.6" cy="133.8" r="1.3" fill="#ffe0a0"/>
<circle cx="287.8" cy="68.3" r="1.1" fill="#ff9060"/>
</g>
</svg>
<div class="dd" style="left:852px;top:470px;width:300px;height:21px"><div class="v"></div></div>
<div class="a" style="transform:scaleX(0.9348);transform-origin:0 0;left:856.6px;top:476.49px;font-size:11px;line-height:11px;white-space:nowrap">10'x10' (Colour) SDSS</div>
<svg class="a" style="left:28px;top:558px" width="408" height="65" viewBox="0 0 408 65"><rect x="0" y="0" width="408" height="65" fill="#000"/><rect x="1" y="1" width="27" height="47" fill="#8080FF"/><rect x="28" y="1" width="16" height="47" fill="#4010D0"/><rect x="44" y="1" width="16" height="47" fill="#300898"/><rect x="60" y="1" width="14" height="47" fill="#200868"/><rect x="348" y="1" width="15" height="47" fill="#200868"/><rect x="363" y="1" width="15" height="47" fill="#300898"/><rect x="378" y="1" width="15" height="47" fill="#4010D0"/><rect x="393" y="1" width="14" height="47" fill="#8080FF"/><line x1="1" y1="16.5" x2="406" y2="16.5" stroke="#3C3C3C" stroke-width="1" stroke-dasharray="1 2"/><line x1="1" y1="32.5" x2="406" y2="32.5" stroke="#3C3C3C" stroke-width="1" stroke-dasharray="1 2"/><rect x="1" y="49" width="406" height="15" fill="#fff"/><path d="M9.7 42.0H15.1M12.4 39.3V44.7" stroke="#F83838" stroke-width="1.3"/><path d="M22.2 42.0H27.6M24.9 39.3V44.7" stroke="#F83838" stroke-width="1.3"/><path d="M33.9 42.4H39.3M36.6 39.7V45.1" stroke="#F83838" stroke-width="1.3"/><path d="M45.7 42.0H51.1M48.4 39.3V44.7" stroke="#F83838" stroke-width="1.3"/><path d="M57.9 41.3H63.3M60.6 38.6V44.0" stroke="#F83838" stroke-width="1.3"/><path d="M70.0 40.2H75.4M72.7 37.5V42.9" stroke="#F83838" stroke-width="1.3"/><path d="M82.2 38.8H87.6M84.9 36.1V41.5" stroke="#F83838" stroke-width="1.3"/><path d="M93.9 38.1H99.3M96.6 35.4V40.8" stroke="#F83838" stroke-width="1.3"/><path d="M105.7 37.0H111.1M108.4 34.3V39.7" stroke="#F83838" stroke-width="1.3"/><path d="M117.9 35.2H123.3M120.6 32.5V37.9" stroke="#F83838" stroke-width="1.3"/><path d="M129.7 33.8H135.1M132.4 31.1V36.5" stroke="#F83838" stroke-width="1.3"/><path d="M141.8 32.0H147.2M144.5 29.3V34.7" stroke="#F83838" stroke-width="1.3"/><path d="M153.6 29.9H159.0M156.3 27.2V32.6" stroke="#F83838" stroke-width="1.3"/><path d="M165.7 28.1H171.1M168.4 25.4V30.8" stroke="#F83838" stroke-width="1.3"/><path d="M177.9 26.3H183.3M180.6 23.6V29.0" stroke="#F83838" stroke-width="1.3"/><path d="M190.0 24.1H195.4M192.7 21.4V26.8" stroke="#F83838" stroke-width="1.3"/><path d="M201.8 22.0H207.2M204.5 19.3V24.7" stroke="#F83838" stroke-width="1.3"/><path d="M213.9 19.1H219.3M216.6 16.4V21.8" stroke="#F83838" stroke-width="1.3"/><path d="M225.7 17.4H231.1M228.4 14.7V20.1" stroke="#F83838" stroke-width="1.3"/><path d="M237.9 14.9H243.3M240.6 12.2V17.6" stroke="#F83838" stroke-width="1.3"/><path d="M250.0 12.4H255.4M252.7 9.7V15.1" stroke="#F83838" stroke-width="1.3"/><path d="M261.8 9.9H267.2M264.5 7.2V12.6" stroke="#F83838" stroke-width="1.3"/><path d="M273.9 7.4H279.3M276.6 4.7V10.1" stroke="#F83838" stroke-width="1.3"/><path d="M285.7 5.2H291.1M288.4 2.5V7.9" stroke="#F83838" stroke-width="1.3"/><path d="M297.9 4.1H303.3M300.6 1.4V6.8" stroke="#F83838" stroke-width="1.3"/><path d="M309.7 4.1H315.1M312.4 1.4V6.8" stroke="#F83838" stroke-width="1.3"/><path d="M321.4 5.2H326.8M324.1 2.5V7.9" stroke="#F83838" stroke-width="1.3"/><path d="M333.6 7.0H339.0M336.3 4.3V9.7" stroke="#F83838" stroke-width="1.3"/><path d="M345.7 8.8H351.1M348.4 6.1V11.5" stroke="#F83838" stroke-width="1.3"/><path d="M357.5 12.0H362.9M360.2 9.3V14.7" stroke="#F83838" stroke-width="1.3"/><path d="M369.7 13.8H375.1M372.4 11.1V16.5" stroke="#F83838" stroke-width="1.3"/><path d="M381.8 16.3H387.2M384.5 13.6V19.0" stroke="#F83838" stroke-width="1.3"/><path d="M393.9 18.8H399.3M396.6 16.1V21.5" stroke="#F83838" stroke-width="1.3"/><circle cx="90.2" cy="48.1" r="2.9" fill="#F8F830"/><circle cx="108.1" cy="44.1" r="2.9" fill="#F8F830"/><circle cx="132.4" cy="39.1" r="2.9" fill="#F8F830"/><circle cx="156.3" cy="34.1" r="2.9" fill="#F8F830"/><circle cx="180.6" cy="29.1" r="2.9" fill="#F8F830"/><circle cx="204.5" cy="24.1" r="2.9" fill="#F8F830"/><circle cx="228.4" cy="20.2" r="2.9" fill="#F8F830"/><circle cx="252.7" cy="18.1" r="2.9" fill="#F8F830"/><circle cx="276.6" cy="18.1" r="2.9" fill="#F8F830"/><circle cx="300.6" cy="20.2" r="2.9" fill="#F8F830"/><circle cx="324.1" cy="24.1" r="2.9" fill="#F8F830"/><circle cx="348.4" cy="28.1" r="2.9" fill="#F8F830"/><circle cx="372.4" cy="34.1" r="2.9" fill="#F8F830"/><circle cx="396.6" cy="39.1" r="2.9" fill="#F8F830"/><rect x="0" y="0" width="407" height="49" fill="none" stroke="#000" stroke-width="2"/></svg>
<div class="a" style="left:40.0px;top:607px;width:1px;height:3px;background:#000"></div>
<div class="a" style="transform:scaleX(0.8342);transform-origin:0 0;left:34.7px;top:609.92px;font-size:12.5px;line-height:12.5px;white-space:nowrap">16</div>
<div class="a" style="left:64.0px;top:607px;width:1px;height:3px;background:#000"></div>
<div class="a" style="transform:scaleX(0.8342);transform-origin:0 0;left:58.7px;top:609.92px;font-size:12.5px;line-height:12.5px;white-space:nowrap">17</div>
<div class="a" style="left:88.0px;top:607px;width:1px;height:3px;background:#000"></div>
<div class="a" style="transform:scaleX(0.8342);transform-origin:0 0;left:82.7px;top:609.92px;font-size:12.5px;line-height:12.5px;white-space:nowrap">18</div>
<div class="a" style="left:112.0px;top:607px;width:1px;height:3px;background:#000"></div>
<div class="a" style="transform:scaleX(0.8342);transform-origin:0 0;left:106.7px;top:609.92px;font-size:12.5px;line-height:12.5px;white-space:nowrap">19</div>
<div class="a" style="left:136.0px;top:607px;width:1px;height:3px;background:#000"></div>
<div class="a" style="transform:scaleX(0.8342);transform-origin:0 0;left:130.7px;top:609.92px;font-size:12.5px;line-height:12.5px;white-space:nowrap">20</div>
<div class="a" style="left:160.0px;top:607px;width:1px;height:3px;background:#000"></div>
<div class="a" style="transform:scaleX(0.8342);transform-origin:0 0;left:154.7px;top:609.92px;font-size:12.5px;line-height:12.5px;white-space:nowrap">21</div>
<div class="a" style="left:184.0px;top:607px;width:1px;height:3px;background:#000"></div>
<div class="a" style="transform:scaleX(0.8342);transform-origin:0 0;left:178.7px;top:609.92px;font-size:12.5px;line-height:12.5px;color:#B01010;white-space:nowrap">22</div>
<div class="a" style="left:208.0px;top:607px;width:1px;height:3px;background:#000"></div>
<div class="a" style="transform:scaleX(0.8342);transform-origin:0 0;left:202.7px;top:609.92px;font-size:12.5px;line-height:12.5px;white-space:nowrap">23</div>
<div class="a" style="left:232.0px;top:607px;width:1px;height:3px;background:#000"></div>
<div class="a" style="transform:scaleX(0.8485);transform-origin:0 0;left:229.55px;top:609.92px;font-size:12.5px;line-height:12.5px;white-space:nowrap">0</div>
<div class="a" style="left:256.0px;top:607px;width:1px;height:3px;background:#000"></div>
<div class="a" style="transform:scaleX(0.8485);transform-origin:0 0;left:253.55px;top:609.92px;font-size:12.5px;line-height:12.5px;white-space:nowrap">1</div>
<div class="a" style="left:280.0px;top:607px;width:1px;height:3px;background:#000"></div>
<div class="a" style="transform:scaleX(0.8485);transform-origin:0 0;left:277.55px;top:609.92px;font-size:12.5px;line-height:12.5px;white-space:nowrap">2</div>
<div class="a" style="left:304.0px;top:607px;width:1px;height:3px;background:#000"></div>
<div class="a" style="transform:scaleX(0.8485);transform-origin:0 0;left:301.55px;top:609.92px;font-size:12.5px;line-height:12.5px;white-space:nowrap">3</div>
<div class="a" style="left:328.0px;top:607px;width:1px;height:3px;background:#000"></div>
<div class="a" style="transform:scaleX(0.8485);transform-origin:0 0;left:325.55px;top:609.92px;font-size:12.5px;line-height:12.5px;white-space:nowrap">4</div>
<div class="a" style="left:352.0px;top:607px;width:1px;height:3px;background:#000"></div>
<div class="a" style="transform:scaleX(0.8485);transform-origin:0 0;left:349.55px;top:609.92px;font-size:12.5px;line-height:12.5px;white-space:nowrap">5</div>
<div class="a" style="left:376.0px;top:607px;width:1px;height:3px;background:#000"></div>
<div class="a" style="transform:scaleX(0.8485);transform-origin:0 0;left:373.55px;top:609.92px;font-size:12.5px;line-height:12.5px;white-space:nowrap">6</div>
<div class="a" style="left:400.0px;top:607px;width:1px;height:3px;background:#000"></div>
<div class="a" style="transform:scaleX(0.8485);transform-origin:0 0;left:397.55px;top:609.92px;font-size:12.5px;line-height:12.5px;white-space:nowrap">7</div>
<div class="a" style="left:424.0px;top:607px;width:1px;height:3px;background:#000"></div>
<div class="a" style="transform:scaleX(0.8485);transform-origin:0 0;left:421.55px;top:609.92px;font-size:12.5px;line-height:12.5px;white-space:nowrap">8</div>
<svg class="a" style="left:440px;top:558px" width="365" height="65" viewBox="0 0 365 65"><rect x="0" y="0" width="365" height="65" fill="#000"/><rect x="122.60000000000002" y="1" width="76.79999999999995" height="47" fill="#220878"/><rect x="360" y="1" width="3" height="47" fill="#8080FF"/><line x1="4.5" y1="1" x2="4.5" y2="48" stroke="#66646A" stroke-width="1"/><line x1="11.5" y1="1" x2="11.5" y2="48" stroke="#66646A" stroke-width="1"/><line x1="18.5" y1="1" x2="18.5" y2="48" stroke="#66646A" stroke-width="1"/><line x1="25.5" y1="1" x2="25.5" y2="48" stroke="#66646A" stroke-width="1"/><line x1="32.5" y1="1" x2="32.5" y2="48" stroke="#66646A" stroke-width="1"/><line x1="39.5" y1="1" x2="39.5" y2="48" stroke="#66646A" stroke-width="1"/><line x1="45.5" y1="1" x2="45.5" y2="48" stroke="#66646A" stroke-width="1"/><line x1="52.5" y1="1" x2="52.5" y2="48" stroke="#66646A" stroke-width="1"/><line x1="59.5" y1="1" x2="59.5" y2="48" stroke="#66646A" stroke-width="1"/><line x1="66.5" y1="1" x2="66.5" y2="48" stroke="#66646A" stroke-width="1"/><line x1="73.5" y1="1" x2="73.5" y2="48" stroke="#66646A" stroke-width="1"/><line x1="80.5" y1="1" x2="80.5" y2="48" stroke="#66646A" stroke-width="1"/><line x1="87.5" y1="1" x2="87.5" y2="48" stroke="#66646A" stroke-width="1"/><line x1="94.5" y1="1" x2="94.5" y2="48" stroke="#66646A" stroke-width="1"/><line x1="101.5" y1="1" x2="101.5" y2="48" stroke="#66646A" stroke-width="1"/><line x1="108.5" y1="1" x2="108.5" y2="48" stroke="#66646A" stroke-width="1"/><line x1="115.5" y1="1" x2="115.5" y2="48" stroke="#66646A" stroke-width="1"/><line x1="122.5" y1="1" x2="122.5" y2="48" stroke="#66646A" stroke-width="1"/><line x1="129.5" y1="1" x2="129.5" y2="48" stroke="#66646A" stroke-width="1"/><line x1="136.5" y1="1" x2="136.5" y2="48" stroke="#66646A" stroke-width="1"/><line x1="143.5" y1="1" x2="143.5" y2="48" stroke="#66646A" stroke-width="1"/><line x1="150.5" y1="1" x2="150.5" y2="48" stroke="#66646A" stroke-width="1"/><line x1="157.5" y1="1" x2="157.5" y2="48" stroke="#66646A" stroke-width="1"/><line x1="164.5" y1="1" x2="164.5" y2="48" stroke="#66646A" stroke-width="1"/><line x1="171.5" y1="1" x2="171.5" y2="48" stroke="#66646A" stroke-width="1"/><line x1="178.5" y1="1" x2="178.5" y2="48" stroke="#66646A" stroke-width="1"/><line x1="185.5" y1="1" x2="185.5" y2="48" stroke="#66646A" stroke-width="1"/><line x1="192.5" y1="1" x2="192.5" y2="48" stroke="#66646A" stroke-width="1"/><line x1="199.5" y1="1" x2="199.5" y2="48" stroke="#66646A" stroke-width="1"/><line x1="206.5" y1="1" x2="206.5" y2="48" stroke="#66646A" stroke-width="1"/><line x1="213.5" y1="1" x2="213.5" y2="48" stroke="#66646A" stroke-width="1"/><line x1="220.5" y1="1" x2="220.5" y2="48" stroke="#66646A" stroke-width="1"/><line x1="227.5" y1="1" x2="227.5" y2="48" stroke="#66646A" stroke-width="1"/><line x1="234.5" y1="1" x2="234.5" y2="48" stroke="#66646A" stroke-width="1"/><line x1="241.5" y1="1" x2="241.5" y2="48" stroke="#66646A" stroke-width="1"/><line x1="248.5" y1="1" x2="248.5" y2="48" stroke="#66646A" stroke-width="1"/><line x1="255.5" y1="1" x2="255.5" y2="48" stroke="#66646A" stroke-width="1"/><line x1="262.5" y1="1" x2="262.5" y2="48" stroke="#66646A" stroke-width="1"/><line x1="269.5" y1="1" x2="269.5" y2="48" stroke="#66646A" stroke-width="1"/><line x1="276.5" y1="1" x2="276.5" y2="48" stroke="#66646A" stroke-width="1"/><line x1="283.5" y1="1" x2="283.5" y2="48" stroke="#66646A" stroke-width="1"/><line x1="290.5" y1="1" x2="290.5" y2="48" stroke="#66646A" stroke-width="1"/><line x1="297.5" y1="1" x2="297.5" y2="48" stroke="#66646A" stroke-width="1"/><line x1="304.5" y1="1" x2="304.5" y2="48" stroke="#66646A" stroke-width="1"/><line x1="311.5" y1="1" x2="311.5" y2="48" stroke="#66646A" stroke-width="1"/><line x1="318.5" y1="1" x2="318.5" y2="48" stroke="#66646A" stroke-width="1"/><line x1="325.5" y1="1" x2="325.5" y2="48" stroke="#66646A" stroke-width="1"/><line x1="332.5" y1="1" x2="332.5" y2="48" stroke="#66646A" stroke-width="1"/><line x1="339.5" y1="1" x2="339.5" y2="48" stroke="#66646A" stroke-width="1"/><line x1="346.5" y1="1" x2="346.5" y2="48" stroke="#66646A" stroke-width="1"/><line x1="353.5" y1="1" x2="353.5" y2="48" stroke="#66646A" stroke-width="1"/><line x1="360.5" y1="1" x2="360.5" y2="48" stroke="#66646A" stroke-width="1"/><line x1="1" y1="16.5" x2="360" y2="16.5" stroke="#3C3C3C" stroke-width="1" stroke-dasharray="1 2"/><line x1="1" y1="32.5" x2="360" y2="32.5" stroke="#3C3C3C" stroke-width="1" stroke-dasharray="1 2"/><circle cx="21.3" cy="30.3" r="2.8" fill="#8A9428"/><circle cx="49.4" cy="35.3" r="2.8" fill="#8A9428"/><circle cx="77.4" cy="41.3" r="2.8" fill="#8A9428"/><circle cx="105.3" cy="46.1" r="2.8" fill="#8A9428"/><circle cx="140.4" cy="32.4" r="2.8" fill="#8A9428"/><circle cx="168.7" cy="41.3" r="2.8" fill="#8A9428"/><circle cx="231.7" cy="43.4" r="2.8" fill="#8A9428"/><circle cx="259.6" cy="46.1" r="2.8" fill="#8A9428"/><circle cx="329.4" cy="45.3" r="2.8" fill="#8A9428"/><path d="M4.2 29.5H9.8M7.0 26.7V32.3" stroke="#F83838" stroke-width="1.5"/><path d="M11.6 27.2H17.2M14.4 24.4V30.0" stroke="#F83838" stroke-width="1.5"/><path d="M18.5 25.0H24.1M21.3 22.2V27.8" stroke="#F83838" stroke-width="1.5"/><path d="M25.8 23.5H31.4M28.6 20.7V26.3" stroke="#F83838" stroke-width="1.5"/><path d="M32.6 21.4H38.2M35.4 18.6V24.2" stroke="#F83838" stroke-width="1.5"/><path d="M39.9 19.5H45.5M42.7 16.7V22.3" stroke="#F83838" stroke-width="1.5"/><path d="M46.6 17.4H52.2M49.4 14.6V20.2" stroke="#F83838" stroke-width="1.5"/><path d="M53.6 14.6H59.2M56.4 11.8V17.4" stroke="#F83838" stroke-width="1.5"/><path d="M60.9 12.5H66.5M63.7 9.7V15.3" stroke="#F83838" stroke-width="1.5"/><path d="M67.8 10.6H73.4M70.6 7.8V13.4" stroke="#F83838" stroke-width="1.5"/><path d="M74.6 8.2H80.2M77.4 5.4V11.0" stroke="#F83838" stroke-width="1.5"/><path d="M81.5 6.5H87.1M84.3 3.7V9.3" stroke="#F83838" stroke-width="1.5"/><path d="M88.6 4.6H94.2M91.4 1.8V7.4" stroke="#F83838" stroke-width="1.5"/><path d="M95.6 3.3H101.2M98.4 0.5V6.1" stroke="#F83838" stroke-width="1.5"/><path d="M102.5 4.6H108.1M105.3 1.8V7.4" stroke="#F83838" stroke-width="1.5"/><path d="M109.8 6.5H115.4M112.6 3.7V9.3" stroke="#F83838" stroke-width="1.5"/><path d="M116.6 8.5H122.2M119.4 5.7V11.3" stroke="#F83838" stroke-width="1.5"/><path d="M123.9 10.6H129.5M126.7 7.8V13.4" stroke="#F83838" stroke-width="1.5"/><path d="M130.6 12.5H136.2M133.4 9.7V15.3" stroke="#F83838" stroke-width="1.5"/><path d="M137.6 14.6H143.2M140.4 11.8V17.4" stroke="#F83838" stroke-width="1.5"/><path d="M144.5 16.6H150.1M147.3 13.8V19.4" stroke="#F83838" stroke-width="1.5"/><path d="M151.7 19.5H157.3M154.5 16.7V22.3" stroke="#F83838" stroke-width="1.5"/><path d="M158.6 21.4H164.2M161.4 18.6V24.2" stroke="#F83838" stroke-width="1.5"/><path d="M165.9 23.5H171.5M168.7 20.7V26.3" stroke="#F83838" stroke-width="1.5"/><path d="M172.7 25.0H178.3M175.5 22.2V27.8" stroke="#F83838" stroke-width="1.5"/><path d="M179.6 27.2H185.2M182.4 24.4V30.0" stroke="#F83838" stroke-width="1.5"/><path d="M186.6 29.5H192.2M189.4 26.7V32.3" stroke="#F83838" stroke-width="1.5"/><path d="M193.8 30.8H199.4M196.6 28.0V33.6" stroke="#F83838" stroke-width="1.5"/><path d="M200.6 32.4H206.2M203.4 29.6V35.2" stroke="#F83838" stroke-width="1.5"/><path d="M207.9 34.8H213.5M210.7 32.0V37.6" stroke="#F83838" stroke-width="1.5"/><path d="M214.8 35.6H220.4M217.6 32.8V38.4" stroke="#F83838" stroke-width="1.5"/><path d="M221.9 37.6H227.5M224.7 34.8V40.4" stroke="#F83838" stroke-width="1.5"/><path d="M228.9 38.5H234.5M231.7 35.7V41.3" stroke="#F83838" stroke-width="1.5"/><path d="M235.8 39.3H241.4M238.6 36.5V42.1" stroke="#F83838" stroke-width="1.5"/><path d="M242.6 40.5H248.2M245.4 37.7V43.3" stroke="#F83838" stroke-width="1.5"/><path d="M249.9 41.3H255.5M252.7 38.5V44.1" stroke="#F83838" stroke-width="1.5"/><path d="M256.8 42.4H262.4M259.6 39.6V45.2" stroke="#F83838" stroke-width="1.5"/><path d="M264.0 42.4H269.6M266.8 39.6V45.2" stroke="#F83838" stroke-width="1.5"/><path d="M270.9 42.6H276.5M273.7 39.8V45.4" stroke="#F83838" stroke-width="1.5"/><path d="M277.8 42.6H283.4M280.6 39.8V45.4" stroke="#F83838" stroke-width="1.5"/><path d="M284.6 42.6H290.2M287.4 39.8V45.4" stroke="#F83838" stroke-width="1.5"/><path d="M291.9 42.4H297.5M294.7 39.6V45.2" stroke="#F83838" stroke-width="1.5"/><path d="M298.8 42.0H304.4M301.6 39.2V44.8" stroke="#F83838" stroke-width="1.5"/><path d="M306.0 40.8H311.6M308.8 38.0V43.6" stroke="#F83838" stroke-width="1.5"/><path d="M312.9 40.1H318.5M315.7 37.3V42.9" stroke="#F83838" stroke-width="1.5"/><path d="M319.8 39.2H325.4M322.6 36.4V42.0" stroke="#F83838" stroke-width="1.5"/><path d="M326.6 38.5H332.2M329.4 35.7V41.3" stroke="#F83838" stroke-width="1.5"/><path d="M333.9 37.2H339.5M336.7 34.4V40.0" stroke="#F83838" stroke-width="1.5"/><path d="M340.7 36.0H346.3M343.5 33.2V38.8" stroke="#F83838" stroke-width="1.5"/><path d="M347.6 34.3H353.2M350.4 31.5V37.1" stroke="#F83838" stroke-width="1.5"/><path d="M354.4 32.7H360.0M357.2 29.9V35.5" stroke="#F83838" stroke-width="1.5"/><circle cx="28.1" cy="18.2" r="2.8" fill="#F4F428"/><circle cx="56.4" cy="16.2" r="2.8" fill="#F4F428"/><circle cx="84.3" cy="18.2" r="2.8" fill="#F4F428"/><circle cx="91.4" cy="47.4" r="2.8" fill="#F4F428"/><circle cx="112.6" cy="24.3" r="2.8" fill="#F4F428"/><circle cx="119.4" cy="44.5" r="2.8" fill="#F4F428"/><circle cx="147.3" cy="41.3" r="2.8" fill="#F4F428"/><circle cx="175.5" cy="40.1" r="2.8" fill="#F4F428"/><circle cx="203.4" cy="41.3" r="2.8" fill="#F4F428"/><circle cx="210.7" cy="43.4" r="2.8" fill="#F4F428"/><circle cx="238.6" cy="34.5" r="2.8" fill="#F4F428"/><circle cx="266.8" cy="26.4" r="2.8" fill="#F4F428"/><circle cx="294.7" cy="18.2" r="2.8" fill="#F4F428"/><circle cx="322.6" cy="14.3" r="2.8" fill="#F4F428"/><circle cx="350.4" cy="14.3" r="2.8" fill="#F4F428"/><circle cx="357.2" cy="39.3" r="2.8" fill="#F4F428"/><circle cx="1.5" cy="23.0" r="2.8" fill="#F4F428"/><rect x="1" y="48" width="363" height="4" fill="#000"/><rect x="0.6" y="49" width="17.0" height="2" fill="#fff"/><rect x="45.9" y="49" width="30.7" height="2" fill="#fff"/><rect x="107.0" y="49" width="31.0" height="2" fill="#fff"/><rect x="167.9" y="49" width="30.7" height="2" fill="#fff"/><rect x="230.0" y="49" width="29.5" height="2" fill="#fff"/><rect x="291.0" y="49" width="29.5" height="2" fill="#fff"/><rect x="352.0" y="49" width="10.5" height="2" fill="#fff"/><rect x="1" y="52" width="363" height="12" fill="#fff"/><rect x="0.5" y="0.5" width="364" height="64" fill="none" stroke="#000" stroke-width="1.2"/></svg>
<div class="a" style="transform:scaleX(0.8675);transform-origin:0 0;left:463.9px;top:610.27px;font-size:11.5px;line-height:11.5px;white-space:nowrap">Feb</div>
<div class="a" style="transform:scaleX(0.8530);transform-origin:0 0;left:493.2px;top:610.27px;font-size:11.5px;line-height:11.5px;white-space:nowrap">Mar</div>
<div class="a" style="transform:scaleX(0.9215);transform-origin:0 0;left:524.3px;top:610.27px;font-size:11.5px;line-height:11.5px;white-space:nowrap">Apr</div>
<div class="a" style="transform:scaleX(0.9064);transform-origin:0 0;left:552.6px;top:610.27px;font-size:11.5px;line-height:11.5px;white-space:nowrap">May</div>
<div class="a" style="transform:scaleX(0.9382);transform-origin:0 0;left:584px;top:610.27px;font-size:11.5px;line-height:11.5px;white-space:nowrap">Jun</div>
<div class="a" style="transform:scaleX(0.9386);transform-origin:0 0;left:616.7px;top:610.27px;font-size:11.5px;line-height:11.5px;white-space:nowrap">Jul</div>
<div class="a" style="transform:scaleX(0.9478);transform-origin:0 0;left:645px;top:610.27px;font-size:11.5px;line-height:11.5px;white-space:nowrap">Aug</div>
<div class="a" style="transform:scaleX(0.9087);transform-origin:0 0;left:675.7px;top:610.27px;font-size:11.5px;line-height:11.5px;white-space:nowrap">Sep</div>
<div class="a" style="transform:scaleX(0.9502);transform-origin:0 0;left:707.2px;top:610.27px;font-size:11.5px;line-height:11.5px;white-space:nowrap">Oct</div>
<div class="a" style="transform:scaleX(0.9485);transform-origin:0 0;left:736.3px;top:610.27px;font-size:11.5px;line-height:11.5px;white-space:nowrap">Nov</div>
<div class="a" style="transform:scaleX(0.9876);transform-origin:0 0;left:766.2px;top:610.27px;font-size:11.5px;line-height:11.5px;white-space:nowrap">Dec</div>
<svg class="a" style="left:808px;top:558px" width="131" height="65" viewBox="0 0 131 65"><rect width="131" height="65" fill="#000"/><g stroke="#fff" stroke-width="1" fill="none"><path d="M44.80 2.46 A30.5 30.5 0 0 1 69.22 25.64"/><path d="M69.22 39.36 A30.5 30.5 0 0 1 44.80 62.54"/><path d="M34.20 62.54 A30.5 30.5 0 0 1 9.78 39.36"/><path d="M9.78 25.64 A30.5 30.5 0 0 1 34.20 2.46"/><path d="M16.00 32.50 H61.5"/><path d="M39.50 14.00 V32.5"/><path d="M115.50 1.00 V64"/><path d="M84.50 32.50 H110"/><path d="M115.50 63.50 A31 31 0 0 1 115.50 1.50"/><path d="M88.65 48.00 L90.82 46.75"/><path d="M100.00 59.35 L101.25 57.18"/><path d="M88.65 17.00 L90.82 18.25"/><path d="M100.00 5.65 L101.25 7.82"/></g><path d="M41.54 34.11 L54.21 19.28 L56.79 21.49 L57.60 11.00 L47.37 13.44 L49.95 15.64 L37.29 30.47 Z" fill="#8C8C8C" stroke="#C8C8C8" stroke-width="0.8"/><path d="M120.48 29.82 L99.10 20.08 L100.51 16.98 L90.20 19.10 L95.36 28.27 L96.77 25.17 L118.16 34.92 Z" fill="#8C8C8C" stroke="#C8C8C8" stroke-width="0.8"/><rect x="26.5" y="34.5" width="25" height="16" fill="#000" stroke="#fff"/><rect x="106.5" y="34.5" width="19" height="16" fill="#000" stroke="#fff"/></svg>
<div class="a" style="left:840px;width:15px;top:558.97px;height:11.5px;line-height:11.5px;font-size:11.5px;color:#fff;text-align:center;white-space:nowrap;transform:scaleX(0.85);transform-origin:50% 0">N</div>
<div class="a" style="left:840px;width:15px;top:609.57px;height:11.5px;line-height:11.5px;font-size:11.5px;color:#fff;text-align:center;white-space:nowrap;transform:scaleX(0.85);transform-origin:50% 0">S</div>
<div class="a" style="left:812px;width:14px;top:584.97px;height:11.5px;line-height:11.5px;font-size:11.5px;color:#fff;text-align:center;white-space:nowrap;transform:scaleX(0.85);transform-origin:50% 0">E</div>
<div class="a" style="left:866px;width:15px;top:584.97px;height:11.5px;line-height:11.5px;font-size:11.5px;color:#fff;text-align:center;white-space:nowrap;transform:scaleX(0.9);transform-origin:50% 0">W</div>
<div class="a" style="left:834px;width:26px;top:594.74px;height:12px;line-height:12px;font-size:12px;color:#fff;text-align:center;white-space:nowrap;transform:scaleX(0.8);transform-origin:50% 0">320°</div>
<div class="a" style="left:914px;width:20px;top:594.74px;height:12px;line-height:12px;font-size:12px;color:#fff;text-align:center;white-space:nowrap;transform:scaleX(0.8);transform-origin:50% 0">28°</div>
<div class="a" style="transform:scaleX(0.9615);transform-origin:0 0;left:942.2px;top:559.19px;font-size:11px;line-height:11px;color:#25256E;white-space:nowrap">NGC3992, UGC6937, Rating:GD</div>
<div class="a" style="transform:scaleX(0.9430);transform-origin:0 0;left:942.2px;top:572.69px;font-size:11px;line-height:11px;color:#25256E;white-space:nowrap">ODM: 21 <svg width="8" height="9" style="vertical-align:0;margin:0 1px"><path d="M0.5 0.5L7.5 8.5M7.5 0.5L0.5 8.5" stroke="#25256E" stroke-width="1.1" fill="none"/></svg> (Best: Micro Guide 12.5mm at</div>
<div class="a" style="transform:scaleX(0.8776);transform-origin:0 0;left:942.2px;top:585.19px;font-size:11px;line-height:11px;color:#25256E;white-space:nowrap">170 <svg width="8" height="9" style="vertical-align:0;margin:0 1px"><path d="M0.5 0.5L7.5 8.5M7.5 0.5L0.5 8.5" stroke="#25256E" stroke-width="1.1" fill="none"/></svg>)</div>
<div class="btn dis" style="left:29px;top:633px;width:115px;height:18px"></div>
<div class="a" style="transform:scaleX(0.9977);transform-origin:0 0;left:50px;top:637.29px;font-size:11px;line-height:11px;color:#ACA899;white-space:nowrap">Slew To Object</div>
<div class="a" style="transform:scaleX(0.9898);transform-origin:0 0;left:54px;top:659.69px;font-size:11px;line-height:11px;color:#3C3C3C;white-space:nowrap">Telescope not</div>
<div class="a" style="transform:scaleX(0.9967);transform-origin:0 0;left:62.4px;top:672.09px;font-size:11px;line-height:11px;color:#3C3C3C;white-space:nowrap">connected</div>
<div class="btn dis" style="left:29px;top:693px;width:115px;height:18px"></div>
<div class="a" style="transform:scaleX(0.9756);transform-origin:0 0;left:51.4px;top:696.59px;font-size:11px;line-height:11px;color:#ACA899;white-space:nowrap">Sync to Object</div>
<div class="btn" style="left:29px;top:721px;width:115px;height:18px"></div>
<div class="a" style="transform:scaleX(0.9641);transform-origin:0 0;left:41.4px;top:724.79px;font-size:11px;line-height:11px;white-space:nowrap">Create New Object</div>
<div class="btn" style="left:29px;top:749px;width:115px;height:18px"></div>
<div class="a" style="transform:scaleX(0.9597);transform-origin:0 0;left:41.4px;top:752.69px;font-size:11px;line-height:11px;white-space:nowrap">Show Field of View</div>
<div class="a" style="transform:scaleX(1.0325);transform-origin:0 0;left:36.2px;top:777.86px;font-size:15.4px;line-height:15.4px;font-weight:bold;color:#1414A0;white-space:nowrap">AstroPlanner</div>
<div class="a" style="transform:scaleX(1.0589);transform-origin:0 0;left:40.8px;top:794.40px;font-size:8.5px;line-height:8.5px;color:#404040;white-space:nowrap">&#169; 2002-6 iLanga, Inc.</div>
<div class="a" style="left:154px;top:632px;width:161px;height:147px;background:#fff;border:1px solid #7F9DB9"></div>
<div class="a" style="left:155px;top:633px;width:159px;height:19px;background:linear-gradient(#F9F8F3,#EFEDE2 70%,#E4E1D2);border-bottom:2px solid #D0CCBC"></div>
<div class="a" style="left:292px;top:636px;width:2px;height:14px;border-left:1px solid #CFCBBB;border-right:1px solid #fff"></div>
<div class="a" style="transform:scaleX(0.9443);transform-origin:0 0;left:193.7px;top:637.79px;font-size:11px;line-height:11px;white-space:nowrap">Observations</div>
<div class="a" style="left:156px;top:653px;width:140px;height:14px;background:#316AC5"></div>
<div class="a" style="transform:scaleX(1.0145);transform-origin:0 0;left:160.5px;top:654.39px;font-size:11px;line-height:11px;color:#fff;white-space:nowrap">8/17/2005&nbsp; 11:42 PM</div>
<div class="a" style="left:296px;top:653px;width:17px;height:125px;background:#FAFAF8"></div>
<div class="a" style="left:297px;top:654px;width:15px;height:16px;border:1px solid #E8E8E0;background:#F4F4EE"><div class="chev up" style="border-color:#C8C8C0"></div></div>
<div class="a" style="left:297px;top:761px;width:15px;height:16px;border:1px solid #E8E8E0;background:#F4F4EE"><div class="chev dn" style="border-color:#C8C8C0"></div></div>
<div class="a" style="left:154px;top:783px;width:20px;height:19px;border:1px solid #000;background:linear-gradient(#F4F3EC,#E2DFD2)"></div>
<div class="a" style="left:175px;top:783px;width:20px;height:19px;border:1px solid #000;background:linear-gradient(#F4F3EC,#E2DFD2)"></div>
<div class="a" style="left:196px;top:783px;width:20px;height:19px;border:1px solid #000;background:linear-gradient(#F4F3EC,#E2DFD2)"></div>
<div class="a" style="left:295px;top:783px;width:20px;height:19px;border:1px solid #000;background:linear-gradient(#F4F3EC,#E2DFD2)"></div>
<svg class="a" style="left:154px;top:783px" width="161" height="19"><path d="M10 4.5V14.5M5 9.5H15" stroke="#222" stroke-width="2.2"/><path d="M26 9.5H36" stroke="#222" stroke-width="2.2"/><path d="M47 3V10M43.5 6.5H50.5M53 8V15M49.5 11.5H56.5" stroke="#222" stroke-width="2"/></svg>
<div class="a" style="transform:scaleX(1.0378);transform-origin:0 0;left:298px;top:785.00px;font-size:13px;line-height:13px;font-weight:bold;color:#222;white-space:nowrap">V</div>
<svg class="a" style="left:295px;top:783px" width="20" height="19"><path d="M13 8.5V15.5M9.5 12H16.5" stroke="#222" stroke-width="2"/></svg>
<div class="dd" style="left:321px;top:632px;width:132px;height:21px"><div class="v"></div></div>
<div class="a" style="transform:scaleX(0.9508);transform-origin:0 0;left:325.3px;top:637.89px;font-size:11px;line-height:11px;white-space:nowrap">Home</div>
<div class="dd" style="left:321px;top:655px;width:132px;height:21px"><div class="v"></div></div>
<div class="a" style="transform:scaleX(0.9733);transform-origin:0 0;left:325.3px;top:660.59px;font-size:11px;line-height:11px;white-space:nowrap">Konus 80 Short Tube</div>
<div class="dd" style="left:321px;top:679px;width:132px;height:21px"><div class="v"></div></div>
<div class="a" style="transform:scaleX(0.9195);transform-origin:0 0;left:325.3px;top:684.79px;font-size:11px;line-height:11px;white-space:nowrap">Plossl 15mm</div>
<div class="dd" style="left:321px;top:702px;width:132px;height:21px"><div class="v"></div></div>
<div class="a" style="transform:scaleX(0.9383);transform-origin:0 0;left:325.3px;top:707.89px;font-size:11px;line-height:11px;white-space:nowrap">No Filter</div>
<div class="dd" style="left:321px;top:725px;width:132px;height:21px"><div class="v"></div></div>
<div class="a" style="transform:scaleX(0.9637);transform-origin:0 0;left:325.3px;top:730.89px;font-size:11px;line-height:11px;white-space:nowrap">No Observing Aids</div>
<div class="dd" style="left:321px;top:760px;width:132px;height:21px"><div class="v"></div></div>
<div class="a" style="left:325.3px;top:765.39px;font-size:11px;line-height:11px;white-space:nowrap">3</div>
<div class="a" style="transform:scaleX(0.9553);transform-origin:0 0;left:323.6px;top:748.19px;font-size:11px;line-height:11px;white-space:nowrap">Rating:</div>
<div class="a" style="transform:scaleX(0.9590);transform-origin:0 0;left:460.9px;top:653.69px;font-size:11px;line-height:11px;white-space:nowrap">User A:</div>
<div class="a" style="left:461px;top:667px;width:120px;height:21px;background:#fff;border-top:2px solid #808078;border-left:2px solid #808078;border-bottom:1px solid #F0F0EA;border-right:1px solid #F0F0EA"></div>
<div class="a" style="transform:scaleX(0.9431);transform-origin:0 0;left:460.9px;top:697.59px;font-size:11px;line-height:11px;white-space:nowrap">User B:</div>
<div class="a" style="left:461px;top:711px;width:120px;height:21px;background:#fff;border-top:2px solid #808078;border-left:2px solid #808078;border-bottom:1px solid #F0F0EA;border-right:1px solid #F0F0EA"></div>
<div class="a" style="transform:scaleX(0.9617);transform-origin:0 0;left:460.9px;top:740.69px;font-size:11px;line-height:11px;white-space:nowrap">Focal Length:</div>
<div class="a" style="transform:scaleX(1.0787);transform-origin:0 0;left:531.5px;top:740.69px;font-size:11px;line-height:11px;white-space:nowrap">n/a</div>
<div class="a" style="transform:scaleX(0.9479);transform-origin:0 0;left:460.9px;top:754.79px;font-size:11px;line-height:11px;white-space:nowrap">Field of View:</div>
<div class="a" style="transform:scaleX(1.0787);transform-origin:0 0;left:531.5px;top:754.79px;font-size:11px;line-height:11px;white-space:nowrap">n/a</div>
<div class="a" style="transform:scaleX(0.9665);transform-origin:0 0;left:460.9px;top:768.59px;font-size:11px;line-height:11px;white-space:nowrap">Magnification:</div>
<div class="a" style="transform:scaleX(1.0787);transform-origin:0 0;left:531.5px;top:768.59px;font-size:11px;line-height:11px;white-space:nowrap">n/a</div>
<div class="a" style="transform:scaleX(0.9636);transform-origin:0 0;left:594px;top:655.09px;font-size:11px;line-height:11px;white-space:nowrap">Observation Notes:&nbsp; (Julian Date: 2453600.48774)</div>
<div class="a" style="left:593px;top:667px;width:552px;height:93px;background:#fff;border-top:2px solid #808078;border-left:2px solid #808078;border-bottom:1px solid #F0F0EA;border-right:1px solid #F0F0EA"></div>
<div class="a" style="transform:scaleX(0.9630);transform-origin:0 0;left:596px;top:671.99px;font-size:11px;line-height:11px;white-space:nowrap">Easily seen with averted vision.</div>
<div class="a" style="transform:scaleX(0.9595);transform-origin:0 0;left:594px;top:766.49px;font-size:11px;line-height:11px;white-space:nowrap">Seeing:</div>
<div class="a" style="left:593px;top:780px;width:401px;height:20px;background:#fff;border-top:2px solid #808078;border-left:2px solid #808078;border-bottom:1px solid #F0F0EA;border-right:1px solid #F0F0EA"></div>
<div class="a" style="transform:scaleX(0.9631);transform-origin:0 0;left:596px;top:783.39px;font-size:11px;line-height:11px;white-space:nowrap">II. Mostly stable</div>
<div class="a" style="transform:scaleX(0.9541);transform-origin:0 0;left:1026.8px;top:766.49px;font-size:11px;line-height:11px;white-space:nowrap">Transparency:</div>
<div class="a" style="left:1027px;top:780px;width:94px;height:20px;background:#fff;border-top:2px solid #808078;border-left:2px solid #808078;border-bottom:1px solid #F0F0EA;border-right:1px solid #F0F0EA"></div>
<div class="a" style="left:1030.3px;top:783.39px;font-size:11px;line-height:11px;white-space:nowrap">4</div>
<div class="a" style="left:999px;top:781px;width:16px;height:18px;border:1px solid #000;background:#ECE9D8"></div>
<div class="a" style="left:1004px;top:785px;width:0;height:0;border-left:5px solid #000;border-top:5px solid transparent;border-bottom:5px solid transparent"></div>
<div class="a" style="left:1128px;top:781px;width:16px;height:18px;border:1px solid #000;background:#ECE9D8"></div>
<div class="a" style="left:1133px;top:785px;width:0;height:0;border-left:5px solid #000;border-top:5px solid transparent;border-bottom:5px solid transparent"></div>
</body></html>
